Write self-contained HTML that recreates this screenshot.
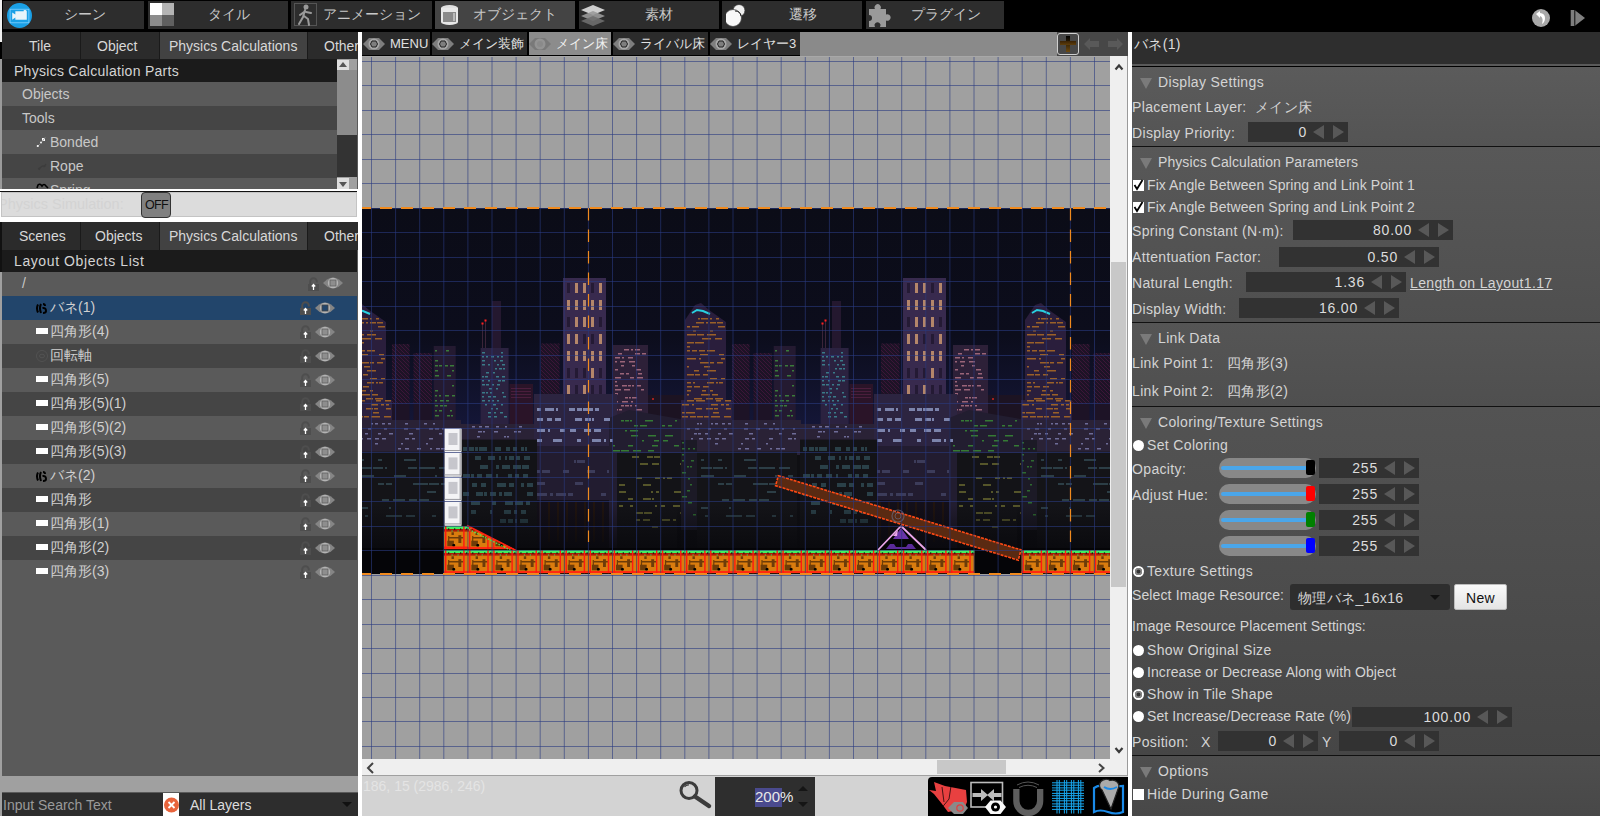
<!DOCTYPE html>
<html><head><meta charset="utf-8">
<style>
*{margin:0;padding:0;box-sizing:border-box}
html,body{width:1600px;height:816px;overflow:hidden;background:#000;font-family:"Liberation Sans",sans-serif;font-size:14px;color:#d4d4d4}
.a{position:absolute}
.t{position:absolute;white-space:nowrap;line-height:16px}
.t13{font-size:13px}
.btn{position:absolute;top:1px;height:28px;background:#2d2d2d}
.btn .l{position:absolute;top:5px;line-height:16px;font-size:14px;color:#c8c8c8;white-space:nowrap}
.tab{position:absolute;background:#2b2b2b;color:#d8d8d8}
.tab span{position:absolute;line-height:16px;white-space:nowrap}
.row{position:absolute;left:2px;width:335px;height:24px}
.lrow{position:absolute;left:2px;width:355px;height:24px}
.spin{position:absolute;height:20px;width:160px;background:#323232}
.spin .v{position:absolute;right:41px;top:2px;line-height:16px;color:#dcdcdc;letter-spacing:0.8px}
.spin .al{position:absolute;right:24px;top:3px;width:0;height:0;border-top:7px solid transparent;border-bottom:7px solid transparent;border-right:11px solid #585858}
.spin .ar{position:absolute;right:4px;top:3px;width:0;height:0;border-top:7px solid transparent;border-bottom:7px solid transparent;border-left:11px solid #585858}
.tri{position:absolute;width:0;height:0;border-left:6.5px solid transparent;border-right:6.5px solid transparent;border-top:11px solid #7a7a7a}
.rad{position:absolute;width:11px;height:11px;border-radius:50%;background:#fff}
.rad.on::after{content:"";position:absolute;left:2px;top:2px;width:7px;height:7px;border-radius:50%;background:#333;box-shadow:inset 0 0 0 1.5px #888}
.chk{position:absolute;width:11px;height:11px;background:#fff}
</style></head><body>

<!-- ============ TOP BAR ============ -->
<div class="a" style="left:0;top:0;width:1600px;height:32px;background:#000"></div>

<div class="btn" style="left:3px;width:141px">
  <svg class="a" style="left:3.5px;top:1.5px" width="25" height="25" viewBox="0 0 24 24"><circle cx="12" cy="12" r="12" fill="#1aa0e6"/><rect x="3" y="6" width="18" height="13" fill="none" stroke="#7fd0ff" stroke-width="0.8"/><path d="M5 9 L8 11 L8 8 L16 8 L16 7 A2 2 0 0 1 19 8 L19 16 L8 16 L8 14 L5 16 Z" fill="#e8f4fa"/></svg>
  <div class="l" style="left:60.5px">シーン</div>
</div>
<div class="btn" style="left:148px;width:140px">
  <svg class="a" style="left:2px;top:2px" width="24" height="23"><rect x="0" y="0" width="12" height="12" fill="#fff"/><rect x="12" y="0" width="12" height="12" fill="#b4b4b4"/><rect x="0" y="12" width="12" height="11" fill="#8c8c8c"/><rect x="12" y="12" width="12" height="11" fill="#606060"/></svg>
  <div class="l" style="left:59.5px">タイル</div>
</div>
<div class="btn" style="left:291px;width:141px">
  <svg class="a" style="left:3px;top:2px" width="23" height="23"><rect x="0.5" y="0.5" width="22" height="22" fill="none" stroke="#555"/><circle cx="12" cy="4" r="2.5" fill="#9a9a9a"/><path d="M11 7 L9 14 L5 21 M10 13 L14 16 L15 22 M10 9 L6 12 M12 9 L17 10" stroke="#9a9a9a" stroke-width="2" fill="none" stroke-linecap="round"/></svg>
  <div class="l" style="left:31.5px">アニメーション</div>
</div>
<div class="btn" style="left:435px;width:140px;background:#444">
  <svg class="a" style="left:5px;top:3px" width="19" height="22"><ellipse cx="9.5" cy="4" rx="8.5" ry="3" fill="#e0e0e0"/><path d="M1 4 L1 18 A8.5 3 0 0 0 18 18 L18 4" fill="#e8e8e8"/><rect x="3" y="8" width="13" height="10" fill="#8a8a8a"/><rect x="13" y="9" width="2" height="8" fill="#bbb"/></svg>
  <div class="l" style="left:37.5px">オブジェクト</div>
</div>
<div class="btn" style="left:579px;width:140px">
  <svg class="a" style="left:2px;top:4px" width="24" height="22"><path d="M0 5 L12 0 L24 5 L12 10 Z" fill="#cfcfcf"/><path d="M0 11 L12 6 L24 11 L12 16 Z" fill="#9a9a9a" opacity="0.9"/><path d="M0 16 L12 11 L24 16 L12 21 Z" fill="#6e6e6e" opacity="0.9"/></svg>
  <div class="l" style="left:66px">素材</div>
</div>
<div class="btn" style="left:722px;width:140px">
  <svg class="a" style="left:4px;top:3px" width="24" height="24"><circle cx="13" cy="6.5" r="6" fill="#f0f0f0" stroke="#333" stroke-width="0.8"/><circle cx="7" cy="14" r="8.5" fill="#f8f8f8" stroke="#444" stroke-width="0.8"/><path d="M9 7 A6 6 0 0 1 15 12" stroke="#222" fill="none"/></svg>
  <div class="l" style="left:66.5px">遷移</div>
</div>
<div class="btn" style="left:866px;width:138px">
  <svg class="a" style="left:2px;top:1.5px" width="26" height="26"><path d="M1 6 L7 6 A3.2 3.2 0 1 1 12.5 6 L18 6 L18 11.5 A3.3 3.3 0 1 1 18 17.5 L18 24 L12 24 A3 3 0 1 0 7 24 L1 24 L1 18 A2.8 2.8 0 1 0 1 12 Z" fill="#9a9a9a"/></svg>
  <div class="l" style="left:45px">プラグイン</div>
</div>

<svg class="a" style="left:1530px;top:7px" width="58" height="22">
  <circle cx="11" cy="11" r="9" fill="#a8a8a8"/>
  <path d="M6 7 L10 4 L10 6 Q15 6.5 15 11 Q15 15 12 17 Q13 14 12.5 12 Q12 9.5 10 9 L10 11 Z" fill="#fff"/>
  <rect x="40.7" y="3" width="3.6" height="16" fill="#7e7e7e"/><rect x="44.3" y="3" width="1" height="16" fill="#333"/>
  <path d="M45.3 3.5 L55 11 L45.3 18.5 Z" fill="#808080"/>
</svg>

<!-- ============ LEFT PANEL ============ -->
<div class="a" style="left:0;top:32px;width:358px;height:784px;background:#5a5a5a"></div>
<div class="a" style="left:0;top:32px;width:1.5px;height:10px;background:#f0f0f0"></div><div class="a" style="left:0;top:0;width:1.5px;height:32px;background:#f0f0f0;z-index:2"></div>
<div class="a" style="left:0;top:42px;width:2px;height:17px;background:#000"></div>
<div class="a" style="left:0;top:59px;width:2px;height:130px;background:#9a9a9a"></div>
<div class="a" style="left:0;top:222px;width:2px;height:50px;background:#111"></div>
<div class="a" style="left:0;top:272px;width:2px;height:544px;background:#a0a0a0"></div>

<!-- tabs 1 -->
<div class="a" style="left:2px;top:32px;width:356px;height:27px;background:#1a1a1a"></div>
<div class="tab" style="left:2px;top:32px;width:78px;height:27px"><span style="left:27px;top:6px">Tile</span></div>
<div class="tab" style="left:81px;top:32px;width:78px;height:27px"><span style="left:16px;top:6px">Object</span></div>
<div class="tab" style="left:160px;top:32px;width:147px;height:27px;background:#424242"><span style="left:9px;top:6px">Physics Calculations</span></div>
<div class="tab" style="left:308px;top:32px;width:50px;height:27px;overflow:hidden"><span style="left:16px;top:6px">Other</span></div>

<div class="a" style="left:2px;top:59px;width:335px;height:23px;background:#1b1b1b"></div>
<div class="t" style="left:14px;top:63px;letter-spacing:0.28px">Physics Calculation Parts</div>
<div class="row" style="top:82px;background:#5a5a5a"></div><div class="t" style="left:22px;top:86px;color:#c8c8c8">Objects</div>
<div class="row" style="top:106px;background:#454545"></div><div class="t" style="left:22px;top:110px;color:#c8c8c8">Tools</div>
<div class="row" style="top:130px;background:#5a5a5a"></div><div class="t" style="left:50px;top:134px;color:#c8c8c8">Bonded</div>
<div class="row" style="top:154px;background:#454545"></div><div class="t" style="left:50px;top:158px;color:#c8c8c8">Rope</div>
<div class="row" style="top:178px;height:11px;background:#5a5a5a;overflow:hidden"><div class="t" style="left:48px;top:4px;color:#c8c8c8">Spring</div></div>
<svg class="a" style="left:36px;top:136px" width="14" height="56"><rect x="6" y="2" width="3" height="3" fill="#fff"/><path d="M9.5 1 L5 7" stroke="#888" stroke-width="0.8"/><circle cx="5" cy="6.5" r="0.9" fill="#fff"/><path d="M4 8 L2 10" stroke="#999" stroke-width="0.8"/><circle cx="1.8" cy="10" r="1.1" fill="#fff"/><path d="M3 34 Q5 29 9 30 Q7 32 10 28 M2 33 L5 31" stroke="#3c3c3c" stroke-width="1.2" fill="none"/><path d="M1 52 L2 49 Q4 47 6 50 Q8 47 10 50 L12 52" stroke="#000" stroke-width="1.6" fill="none"/></svg>
<!-- scrollbar -->
<div class="a" style="left:337px;top:59px;width:20px;height:130px;background:#a0a0a0"></div>
<div class="a" style="left:337px;top:70px;width:20px;height:65px;background:#8c8c8c"></div>
<div class="a" style="left:337px;top:135px;width:20px;height:42px;background:#333"></div>
<div class="a" style="left:337px;top:60px;width:12px;height:10px;background:#dedede"></div>
<div class="a" style="left:339px;top:62px;width:0;height:0;border-left:4px solid transparent;border-right:4px solid transparent;border-bottom:5px solid #555"></div>
<div class="a" style="left:337px;top:178px;width:12px;height:11px;background:#dedede"></div>
<div class="a" style="left:339px;top:182px;width:0;height:0;border-left:4px solid transparent;border-right:4px solid transparent;border-top:5px solid #555"></div>

<!-- off bar -->
<div class="a" style="left:0;top:189px;width:358px;height:33px;background:#fff"></div>
<div class="a" style="left:0;top:191px;width:357px;height:1px;background:#111"></div>
<div class="a" style="left:1px;top:192px;width:356px;height:25px;background:#dcdcdc;border:1px solid #c4c4c4"></div>
<div class="a" style="left:2px;top:193px;width:130px;height:23px;overflow:hidden"><div class="t" style="left:-4px;top:3px;color:#d3d3d3;font-size:14.5px">Physics Simulation:</div></div>
<div class="a" style="left:141px;top:191.5px;width:29.5px;height:26px;background:#808080;border:1.2px solid #333;border-radius:4px"></div>
<div class="t" style="left:145px;top:196.5px;font-size:12.5px;letter-spacing:-0.7px;color:#111">OFF</div>

<!-- tabs 2 -->
<div class="a" style="left:2px;top:222px;width:356px;height:28px;background:#1a1a1a"></div>
<div class="tab" style="left:2px;top:222px;width:78px;height:28px"><span style="left:17px;top:6px">Scenes</span></div>
<div class="tab" style="left:81px;top:222px;width:78px;height:28px"><span style="left:14px;top:6px">Objects</span></div>
<div class="tab" style="left:160px;top:222px;width:147px;height:28px;background:#424242"><span style="left:9px;top:6px">Physics Calculations</span></div>
<div class="tab" style="left:308px;top:222px;width:50px;height:28px;overflow:hidden"><span style="left:16px;top:6px">Other</span></div>

<div class="a" style="left:2px;top:250px;width:355px;height:22px;background:#1b1b1b"></div>
<div class="t" style="left:14px;top:253px;letter-spacing:0.6px">Layout Objects List</div>
<!--list-->
<div class="lrow" style="top:272px;background:#5a5a5a"></div>
<div class="t" style="left:22px;top:275px;color:#c8c8c8">/</div>
<svg class="a" style="left:308px;top:277px" width="11" height="14"><path d="M2.2 8 L2.2 4.5 A3.3 3.3 0 0 1 8.8 4.5 L8.8 5.5" stroke="#4e4e4e" stroke-width="2" fill="none"/><rect x="0" y="7" width="11" height="7" fill="#4e4e4e"/><path d="M5.5 13 L5.5 8 M3.8 9.5 L5.5 7.5 L7.2 9.5" stroke="#fff" stroke-width="1.3" fill="none"/></svg>
<svg class="a" style="left:323px;top:277px" width="20" height="12"><path d="M0 6 L4 2.5 Q10 -1.5 16 2.5 L20 6 L16 9.5 Q10 13.5 4 9.5 Z" fill="#858585"/><circle cx="10" cy="6" r="5.2" fill="#b4b4b4"/><rect x="7" y="3" width="6" height="6" fill="#8e8e8e" stroke="#606060" stroke-width="0.8"/></svg>
<div class="lrow" style="top:296px;background:#22456b"></div>
<svg class="a" style="left:36px;top:303px" width="12" height="11"><path d="M2 1.5 Q0 5 2 9.5 M5 1 Q3 5 5 10 M7 1 Q9 1 9 3 M6.5 5 Q10 4.5 10 8 Q10 10 7 10" stroke="#000" stroke-width="2" fill="none"/></svg>
<div class="t" style="left:50px;top:299px;color:#d0d0d0">バネ(1)</div>
<svg class="a" style="left:300px;top:301px" width="11" height="14"><path d="M2.2 8 L2.2 4.5 A3.3 3.3 0 0 1 8.8 4.5 L8.8 5.5" stroke="#4e4e4e" stroke-width="2" fill="none"/><rect x="0" y="7" width="11" height="7" fill="#4e4e4e"/><path d="M5.5 13 L5.5 8 M3.8 9.5 L5.5 7.5 L7.2 9.5" stroke="#fff" stroke-width="1.3" fill="none"/></svg>
<svg class="a" style="left:315px;top:302px" width="20" height="12"><path d="M0 6 L4 2.5 Q10 -1.5 16 2.5 L20 6 L16 9.5 Q10 13.5 4 9.5 Z" fill="#858585"/><circle cx="10" cy="6" r="5.2" fill="#b4b4b4"/><rect x="7" y="3" width="6" height="6" fill="#22456b" stroke="#444" stroke-width="0.8"/></svg>
<div class="lrow" style="top:320px;background:#5a5a5a"></div>
<div class="a" style="left:36px;top:328px;width:12px;height:6px;background:#fff"></div>
<div class="t" style="left:50px;top:323px;color:#d0d0d0">四角形(4)</div>
<svg class="a" style="left:300px;top:325px" width="11" height="14"><path d="M2.2 8 L2.2 4.5 A3.3 3.3 0 0 1 8.8 4.5 L8.8 5.5" stroke="#4e4e4e" stroke-width="2" fill="none"/><rect x="0" y="7" width="11" height="7" fill="#4e4e4e"/><path d="M5.5 13 L5.5 8 M3.8 9.5 L5.5 7.5 L7.2 9.5" stroke="#fff" stroke-width="1.3" fill="none"/></svg>
<svg class="a" style="left:315px;top:326px" width="20" height="12"><path d="M0 6 L4 2.5 Q10 -1.5 16 2.5 L20 6 L16 9.5 Q10 13.5 4 9.5 Z" fill="#858585"/><circle cx="10" cy="6" r="5.2" fill="#b4b4b4"/><rect x="7" y="3" width="6" height="6" fill="#8e8e8e" stroke="#606060" stroke-width="0.8"/></svg>
<div class="lrow" style="top:344px;background:#454545"></div>
<svg class="a" style="left:36px;top:350px" width="12" height="12"><circle cx="6" cy="6" r="5.5" fill="none" stroke="#555" stroke-width="0.8"/><ellipse cx="6" cy="6" rx="2.5" ry="1.8" fill="none" stroke="#555" stroke-width="0.8"/></svg>
<div class="t" style="left:50px;top:347px;color:#d0d0d0">回転軸</div>
<svg class="a" style="left:300px;top:349px" width="11" height="14"><path d="M2.2 8 L2.2 4.5 A3.3 3.3 0 0 1 8.8 4.5 L8.8 5.5" stroke="#4e4e4e" stroke-width="2" fill="none"/><rect x="0" y="7" width="11" height="7" fill="#4e4e4e"/><path d="M5.5 13 L5.5 8 M3.8 9.5 L5.5 7.5 L7.2 9.5" stroke="#fff" stroke-width="1.3" fill="none"/></svg>
<svg class="a" style="left:315px;top:350px" width="20" height="12"><path d="M0 6 L4 2.5 Q10 -1.5 16 2.5 L20 6 L16 9.5 Q10 13.5 4 9.5 Z" fill="#858585"/><circle cx="10" cy="6" r="5.2" fill="#b4b4b4"/><rect x="7" y="3" width="6" height="6" fill="#8e8e8e" stroke="#606060" stroke-width="0.8"/></svg>
<div class="lrow" style="top:368px;background:#5a5a5a"></div>
<div class="a" style="left:36px;top:376px;width:12px;height:6px;background:#fff"></div>
<div class="t" style="left:50px;top:371px;color:#d0d0d0">四角形(5)</div>
<svg class="a" style="left:300px;top:373px" width="11" height="14"><path d="M2.2 8 L2.2 4.5 A3.3 3.3 0 0 1 8.8 4.5 L8.8 5.5" stroke="#4e4e4e" stroke-width="2" fill="none"/><rect x="0" y="7" width="11" height="7" fill="#4e4e4e"/><path d="M5.5 13 L5.5 8 M3.8 9.5 L5.5 7.5 L7.2 9.5" stroke="#fff" stroke-width="1.3" fill="none"/></svg>
<svg class="a" style="left:315px;top:374px" width="20" height="12"><path d="M0 6 L4 2.5 Q10 -1.5 16 2.5 L20 6 L16 9.5 Q10 13.5 4 9.5 Z" fill="#858585"/><circle cx="10" cy="6" r="5.2" fill="#b4b4b4"/><rect x="7" y="3" width="6" height="6" fill="#8e8e8e" stroke="#606060" stroke-width="0.8"/></svg>
<div class="lrow" style="top:392px;background:#454545"></div>
<div class="a" style="left:36px;top:400px;width:12px;height:6px;background:#fff"></div>
<div class="t" style="left:50px;top:395px;color:#d0d0d0">四角形(5)(1)</div>
<svg class="a" style="left:300px;top:397px" width="11" height="14"><path d="M2.2 8 L2.2 4.5 A3.3 3.3 0 0 1 8.8 4.5 L8.8 5.5" stroke="#4e4e4e" stroke-width="2" fill="none"/><rect x="0" y="7" width="11" height="7" fill="#4e4e4e"/><path d="M5.5 13 L5.5 8 M3.8 9.5 L5.5 7.5 L7.2 9.5" stroke="#fff" stroke-width="1.3" fill="none"/></svg>
<svg class="a" style="left:315px;top:398px" width="20" height="12"><path d="M0 6 L4 2.5 Q10 -1.5 16 2.5 L20 6 L16 9.5 Q10 13.5 4 9.5 Z" fill="#858585"/><circle cx="10" cy="6" r="5.2" fill="#b4b4b4"/><rect x="7" y="3" width="6" height="6" fill="#8e8e8e" stroke="#606060" stroke-width="0.8"/></svg>
<div class="lrow" style="top:416px;background:#5a5a5a"></div>
<div class="a" style="left:36px;top:424px;width:12px;height:6px;background:#fff"></div>
<div class="t" style="left:50px;top:419px;color:#d0d0d0">四角形(5)(2)</div>
<svg class="a" style="left:300px;top:421px" width="11" height="14"><path d="M2.2 8 L2.2 4.5 A3.3 3.3 0 0 1 8.8 4.5 L8.8 5.5" stroke="#4e4e4e" stroke-width="2" fill="none"/><rect x="0" y="7" width="11" height="7" fill="#4e4e4e"/><path d="M5.5 13 L5.5 8 M3.8 9.5 L5.5 7.5 L7.2 9.5" stroke="#fff" stroke-width="1.3" fill="none"/></svg>
<svg class="a" style="left:315px;top:422px" width="20" height="12"><path d="M0 6 L4 2.5 Q10 -1.5 16 2.5 L20 6 L16 9.5 Q10 13.5 4 9.5 Z" fill="#858585"/><circle cx="10" cy="6" r="5.2" fill="#b4b4b4"/><rect x="7" y="3" width="6" height="6" fill="#8e8e8e" stroke="#606060" stroke-width="0.8"/></svg>
<div class="lrow" style="top:440px;background:#454545"></div>
<div class="a" style="left:36px;top:448px;width:12px;height:6px;background:#fff"></div>
<div class="t" style="left:50px;top:443px;color:#d0d0d0">四角形(5)(3)</div>
<svg class="a" style="left:300px;top:445px" width="11" height="14"><path d="M2.2 8 L2.2 4.5 A3.3 3.3 0 0 1 8.8 4.5 L8.8 5.5" stroke="#4e4e4e" stroke-width="2" fill="none"/><rect x="0" y="7" width="11" height="7" fill="#4e4e4e"/><path d="M5.5 13 L5.5 8 M3.8 9.5 L5.5 7.5 L7.2 9.5" stroke="#fff" stroke-width="1.3" fill="none"/></svg>
<svg class="a" style="left:315px;top:446px" width="20" height="12"><path d="M0 6 L4 2.5 Q10 -1.5 16 2.5 L20 6 L16 9.5 Q10 13.5 4 9.5 Z" fill="#858585"/><circle cx="10" cy="6" r="5.2" fill="#b4b4b4"/><rect x="7" y="3" width="6" height="6" fill="#8e8e8e" stroke="#606060" stroke-width="0.8"/></svg>
<div class="lrow" style="top:464px;background:#5a5a5a"></div>
<svg class="a" style="left:36px;top:471px" width="12" height="11"><path d="M2 1.5 Q0 5 2 9.5 M5 1 Q3 5 5 10 M7 1 Q9 1 9 3 M6.5 5 Q10 4.5 10 8 Q10 10 7 10" stroke="#000" stroke-width="2" fill="none"/></svg>
<div class="t" style="left:50px;top:467px;color:#d0d0d0">バネ(2)</div>
<svg class="a" style="left:300px;top:469px" width="11" height="14"><path d="M2.2 8 L2.2 4.5 A3.3 3.3 0 0 1 8.8 4.5 L8.8 5.5" stroke="#4e4e4e" stroke-width="2" fill="none"/><rect x="0" y="7" width="11" height="7" fill="#4e4e4e"/><path d="M5.5 13 L5.5 8 M3.8 9.5 L5.5 7.5 L7.2 9.5" stroke="#fff" stroke-width="1.3" fill="none"/></svg>
<svg class="a" style="left:315px;top:470px" width="20" height="12"><path d="M0 6 L4 2.5 Q10 -1.5 16 2.5 L20 6 L16 9.5 Q10 13.5 4 9.5 Z" fill="#858585"/><circle cx="10" cy="6" r="5.2" fill="#b4b4b4"/><rect x="7" y="3" width="6" height="6" fill="#8e8e8e" stroke="#606060" stroke-width="0.8"/></svg>
<div class="lrow" style="top:488px;background:#454545"></div>
<div class="a" style="left:36px;top:496px;width:12px;height:6px;background:#fff"></div>
<div class="t" style="left:50px;top:491px;color:#d0d0d0">四角形</div>
<svg class="a" style="left:300px;top:493px" width="11" height="14"><path d="M2.2 8 L2.2 4.5 A3.3 3.3 0 0 1 8.8 4.5 L8.8 5.5" stroke="#4e4e4e" stroke-width="2" fill="none"/><rect x="0" y="7" width="11" height="7" fill="#4e4e4e"/><path d="M5.5 13 L5.5 8 M3.8 9.5 L5.5 7.5 L7.2 9.5" stroke="#fff" stroke-width="1.3" fill="none"/></svg>
<svg class="a" style="left:315px;top:494px" width="20" height="12"><path d="M0 6 L4 2.5 Q10 -1.5 16 2.5 L20 6 L16 9.5 Q10 13.5 4 9.5 Z" fill="#858585"/><circle cx="10" cy="6" r="5.2" fill="#b4b4b4"/><rect x="7" y="3" width="6" height="6" fill="#8e8e8e" stroke="#606060" stroke-width="0.8"/></svg>
<div class="lrow" style="top:512px;background:#5a5a5a"></div>
<div class="a" style="left:36px;top:520px;width:12px;height:6px;background:#fff"></div>
<div class="t" style="left:50px;top:515px;color:#d0d0d0">四角形(1)</div>
<svg class="a" style="left:300px;top:517px" width="11" height="14"><path d="M2.2 8 L2.2 4.5 A3.3 3.3 0 0 1 8.8 4.5 L8.8 5.5" stroke="#4e4e4e" stroke-width="2" fill="none"/><rect x="0" y="7" width="11" height="7" fill="#4e4e4e"/><path d="M5.5 13 L5.5 8 M3.8 9.5 L5.5 7.5 L7.2 9.5" stroke="#fff" stroke-width="1.3" fill="none"/></svg>
<svg class="a" style="left:315px;top:518px" width="20" height="12"><path d="M0 6 L4 2.5 Q10 -1.5 16 2.5 L20 6 L16 9.5 Q10 13.5 4 9.5 Z" fill="#858585"/><circle cx="10" cy="6" r="5.2" fill="#b4b4b4"/><rect x="7" y="3" width="6" height="6" fill="#8e8e8e" stroke="#606060" stroke-width="0.8"/></svg>
<div class="lrow" style="top:536px;background:#454545"></div>
<div class="a" style="left:36px;top:544px;width:12px;height:6px;background:#fff"></div>
<div class="t" style="left:50px;top:539px;color:#d0d0d0">四角形(2)</div>
<svg class="a" style="left:300px;top:541px" width="11" height="14"><path d="M2.2 8 L2.2 4.5 A3.3 3.3 0 0 1 8.8 4.5 L8.8 5.5" stroke="#4e4e4e" stroke-width="2" fill="none"/><rect x="0" y="7" width="11" height="7" fill="#4e4e4e"/><path d="M5.5 13 L5.5 8 M3.8 9.5 L5.5 7.5 L7.2 9.5" stroke="#fff" stroke-width="1.3" fill="none"/></svg>
<svg class="a" style="left:315px;top:542px" width="20" height="12"><path d="M0 6 L4 2.5 Q10 -1.5 16 2.5 L20 6 L16 9.5 Q10 13.5 4 9.5 Z" fill="#858585"/><circle cx="10" cy="6" r="5.2" fill="#b4b4b4"/><rect x="7" y="3" width="6" height="6" fill="#8e8e8e" stroke="#606060" stroke-width="0.8"/></svg>
<div class="lrow" style="top:560px;background:#5a5a5a"></div>
<div class="a" style="left:36px;top:568px;width:12px;height:6px;background:#fff"></div>
<div class="t" style="left:50px;top:563px;color:#d0d0d0">四角形(3)</div>
<svg class="a" style="left:300px;top:565px" width="11" height="14"><path d="M2.2 8 L2.2 4.5 A3.3 3.3 0 0 1 8.8 4.5 L8.8 5.5" stroke="#4e4e4e" stroke-width="2" fill="none"/><rect x="0" y="7" width="11" height="7" fill="#4e4e4e"/><path d="M5.5 13 L5.5 8 M3.8 9.5 L5.5 7.5 L7.2 9.5" stroke="#fff" stroke-width="1.3" fill="none"/></svg>
<svg class="a" style="left:315px;top:566px" width="20" height="12"><path d="M0 6 L4 2.5 Q10 -1.5 16 2.5 L20 6 L16 9.5 Q10 13.5 4 9.5 Z" fill="#858585"/><circle cx="10" cy="6" r="5.2" fill="#b4b4b4"/><rect x="7" y="3" width="6" height="6" fill="#8e8e8e" stroke="#606060" stroke-width="0.8"/></svg>
<!--/list-->

<div class="a" style="left:2px;top:776px;width:356px;height:16px;background:#a0a0a0"></div>
<div class="a" style="left:2px;top:793px;width:356px;height:23px;background:#2d2d2d"></div>
<div class="t" style="left:3px;top:797px;color:#9a9a9a">Input Search Text</div>
<div class="a" style="left:163px;top:793px;width:16px;height:23px;background:#fff"></div>
<svg class="a" style="left:163px;top:797px" width="16" height="16"><circle cx="8.5" cy="8" r="7.5" fill="#e8643c"/><path d="M5.5 5 L11.5 11 M11.5 5 L5.5 11" stroke="#fff" stroke-width="1.8"/></svg>
<div class="t" style="left:190px;top:797px;color:#dcdcdc">All Layers</div>
<div class="a" style="left:342px;top:802px;width:0;height:0;border-left:5px solid transparent;border-right:5px solid transparent;border-top:5px solid #111"></div>

<!--canvas-->
<svg class="a" style="left:362px;top:56px" width="748" height="703" viewBox="362 56 748 703">
<defs>
<pattern id="diag" width="4" height="4" patternUnits="userSpaceOnUse"><path d="M0 0 L4 4" stroke="#40163a" stroke-width="0.9"/></pattern>
<linearGradient id="sky" x1="0" y1="0" x2="0" y2="1"><stop offset="0" stop-color="#0b0c17"/><stop offset="0.35" stop-color="#0c0d1c"/><stop offset="0.62" stop-color="#15173a"/><stop offset="0.8" stop-color="#111226"/><stop offset="1" stop-color="#060608"/></linearGradient>
<linearGradient id="lowfade" x1="0" y1="0" x2="0" y2="1"><stop offset="0" stop-color="#08080c" stop-opacity="0"/><stop offset="1" stop-color="#08080c" stop-opacity="0.9"/></linearGradient>
<clipPath id="scene"><rect x="362" y="208" width="748" height="366"/></clipPath>
<g id="ct"><path d="M-2 320 L8 305 L14 303 L22 310 L39 322 L39 450 L-2 450 Z" fill="#2a1e3c"/>
<path d="M5 313 L10 310 L16 311 L23 314" stroke="#29d0e0" stroke-width="2" fill="none"/>
<rect x="11.0" y="318.0" width="2.0" height="1.5" fill="#9a6028"/>
<rect x="14.0" y="318.0" width="7.0" height="1.5" fill="#9a6028"/>
<rect x="23.0" y="318.0" width="2.0" height="1.5" fill="#9a6028"/>
<rect x="29.0" y="318.0" width="3.0" height="1.5" fill="#9a6028"/>
<rect x="9.0" y="322.0" width="8.0" height="1.5" fill="#9a6028"/>
<rect x="19.0" y="322.0" width="2.0" height="1.5" fill="#9a6028"/>
<rect x="23.0" y="322.0" width="6.0" height="1.5" fill="#9a6028"/>
<rect x="30.0" y="322.0" width="6.0" height="1.5" fill="#9a6028"/>
<rect x="0.0" y="326.0" width="3.0" height="1.5" fill="#9a6028"/>
<rect x="5.0" y="326.0" width="7.0" height="1.5" fill="#9a6028"/>
<rect x="31.0" y="326.0" width="7.0" height="1.5" fill="#9a6028"/>
<rect x="6.0" y="330.0" width="3.0" height="1.5" fill="#9a6028"/>
<rect x="23.0" y="330.0" width="3.0" height="1.5" fill="#9a6028"/>
<rect x="0.0" y="334.0" width="9.0" height="1.5" fill="#9a6028"/>
<rect x="10.0" y="334.0" width="7.0" height="1.5" fill="#9a6028"/>
<rect x="20.0" y="334.0" width="9.0" height="1.5" fill="#9a6028"/>
<rect x="15.0" y="338.0" width="9.0" height="1.5" fill="#9a6028"/>
<rect x="28.0" y="338.0" width="7.0" height="1.5" fill="#9a6028"/>
<rect x="0.0" y="342.0" width="7.0" height="1.5" fill="#9a6028"/>
<rect x="8.0" y="342.0" width="9.0" height="1.5" fill="#9a6028"/>
<rect x="0.0" y="346.0" width="3.0" height="1.5" fill="#9a6028"/>
<rect x="0.0" y="350.0" width="3.0" height="1.5" fill="#9a6028"/>
<rect x="5.0" y="350.0" width="5.0" height="1.5" fill="#9a6028"/>
<rect x="12.0" y="350.0" width="6.0" height="1.5" fill="#9a6028"/>
<rect x="20.0" y="350.0" width="8.0" height="1.5" fill="#9a6028"/>
<rect x="13.0" y="354.0" width="8.0" height="1.5" fill="#9a6028"/>
<rect x="32.0" y="354.0" width="5.0" height="1.5" fill="#9a6028"/>
<rect x="0.0" y="358.0" width="9.0" height="1.5" fill="#9a6028"/>
<rect x="12.0" y="358.0" width="2.0" height="1.5" fill="#9a6028"/>
<rect x="34.0" y="358.0" width="4.0" height="1.5" fill="#9a6028"/>
<rect x="13.0" y="362.0" width="9.0" height="1.5" fill="#9a6028"/>
<rect x="23.0" y="362.0" width="4.0" height="1.5" fill="#9a6028"/>
<rect x="30.0" y="362.0" width="6.0" height="1.5" fill="#9a6028"/>
<rect x="0.0" y="366.0" width="2.0" height="1.5" fill="#9a6028"/>
<rect x="17.0" y="366.0" width="6.0" height="1.5" fill="#9a6028"/>
<rect x="7.0" y="370.0" width="5.0" height="1.5" fill="#9a6028"/>
<rect x="20.0" y="370.0" width="9.0" height="1.5" fill="#9a6028"/>
<rect x="0.0" y="374.0" width="7.0" height="1.5" fill="#9a6028"/>
<rect x="8.0" y="374.0" width="5.0" height="1.5" fill="#9a6028"/>
<rect x="16.0" y="374.0" width="5.0" height="1.5" fill="#9a6028"/>
<rect x="23.0" y="378.0" width="7.0" height="1.5" fill="#9a6028"/>
<rect x="34.0" y="378.0" width="4.0" height="1.5" fill="#9a6028"/>
<rect x="0.0" y="382.0" width="4.0" height="1.5" fill="#9a6028"/>
<rect x="6.0" y="382.0" width="2.0" height="1.5" fill="#9a6028"/>
<rect x="20.0" y="382.0" width="7.0" height="1.5" fill="#9a6028"/>
<rect x="29.0" y="382.0" width="2.0" height="1.5" fill="#9a6028"/>
<rect x="32.0" y="382.0" width="4.0" height="1.5" fill="#9a6028"/>
<rect x="0.0" y="386.0" width="5.0" height="1.5" fill="#9a6028"/>
<rect x="7.0" y="386.0" width="6.0" height="1.5" fill="#9a6028"/>
<rect x="16.0" y="386.0" width="6.0" height="1.5" fill="#9a6028"/>
<rect x="0.0" y="390.0" width="4.0" height="1.5" fill="#9a6028"/>
<rect x="15.0" y="390.0" width="4.0" height="1.5" fill="#9a6028"/>
<rect x="23.0" y="390.0" width="3.0" height="1.5" fill="#9a6028"/>
<rect x="0.0" y="394.0" width="2.0" height="1.5" fill="#9a6028"/>
<rect x="14.0" y="394.0" width="9.0" height="1.5" fill="#9a6028"/>
<rect x="25.0" y="394.0" width="6.0" height="1.5" fill="#9a6028"/>
<rect x="7.0" y="398.0" width="8.0" height="1.5" fill="#9a6028"/>
<rect x="19.0" y="398.0" width="7.0" height="1.5" fill="#9a6028"/>
<rect x="28.0" y="398.0" width="8.0" height="1.5" fill="#9a6028"/>
<rect x="-6.0" y="400.0" width="51.0" height="50.0" fill="#2c2040"/>
<rect x="0.0" y="400.0" width="7.0" height="1.5" fill="#9a6028"/>
<rect x="9.0" y="400.0" width="9.0" height="1.5" fill="#9a6028"/>
<rect x="29.0" y="400.0" width="5.0" height="1.5" fill="#9a6028"/>
<rect x="38.0" y="400.0" width="6.0" height="1.5" fill="#9a6028"/>
<rect x="-5.0" y="404.0" width="7.0" height="1.5" fill="#9a6028"/>
<rect x="5.0" y="404.0" width="2.0" height="1.5" fill="#9a6028"/>
<rect x="24.0" y="404.0" width="7.0" height="1.5" fill="#9a6028"/>
<rect x="34.0" y="404.0" width="3.0" height="1.5" fill="#9a6028"/>
<rect x="39.0" y="404.0" width="3.0" height="1.5" fill="#9a6028"/>
<rect x="9.0" y="408.0" width="6.0" height="1.5" fill="#9a6028"/>
<rect x="19.0" y="408.0" width="7.0" height="1.5" fill="#9a6028"/>
<rect x="27.0" y="408.0" width="4.0" height="1.5" fill="#9a6028"/>
<rect x="39.0" y="408.0" width="5.0" height="1.5" fill="#9a6028"/>
<rect x="-5.0" y="412.0" width="3.0" height="1.5" fill="#9a6028"/>
<rect x="-1.0" y="412.0" width="9.0" height="1.5" fill="#9a6028"/>
<rect x="26.0" y="412.0" width="6.0" height="1.5" fill="#9a6028"/>
<rect x="-5.0" y="416.0" width="6.0" height="1.5" fill="#9a6028"/>
<rect x="3.0" y="416.0" width="6.0" height="1.5" fill="#9a6028"/>
<rect x="10.0" y="416.0" width="6.0" height="1.5" fill="#9a6028"/>
<rect x="17.0" y="416.0" width="5.0" height="1.5" fill="#9a6028"/>
<rect x="24.0" y="416.0" width="9.0" height="1.5" fill="#9a6028"/>
<rect x="37.0" y="416.0" width="7.0" height="1.5" fill="#9a6028"/>
<rect x="3.0" y="420.0" width="7.0" height="1.5" fill="#9a6028"/>
<rect x="21.0" y="420.0" width="4.0" height="1.5" fill="#9a6028"/>
<rect x="28.0" y="420.0" width="8.0" height="1.5" fill="#9a6028"/>
<rect x="1.0" y="424.0" width="9.0" height="1.5" fill="#9a6028"/>
<rect x="13.0" y="424.0" width="9.0" height="1.5" fill="#9a6028"/>
<rect x="35.0" y="424.0" width="5.0" height="1.5" fill="#9a6028"/>
<rect x="-5.0" y="428.0" width="5.0" height="1.5" fill="#9a6028"/>
<rect x="1.0" y="428.0" width="7.0" height="1.5" fill="#9a6028"/>
<rect x="12.0" y="428.0" width="6.0" height="1.5" fill="#9a6028"/>
<rect x="20.0" y="428.0" width="5.0" height="1.5" fill="#9a6028"/>
<rect x="26.0" y="428.0" width="3.0" height="1.5" fill="#9a6028"/>
<rect x="30.0" y="428.0" width="4.0" height="1.5" fill="#9a6028"/>
<rect x="35.0" y="428.0" width="8.0" height="1.5" fill="#9a6028"/>
<rect x="-5.0" y="432.0" width="5.0" height="1.5" fill="#9a6028"/>
<rect x="14.0" y="432.0" width="4.0" height="1.5" fill="#9a6028"/>
<rect x="31.0" y="432.0" width="5.0" height="1.5" fill="#9a6028"/>
<rect x="8.0" y="436.0" width="9.0" height="1.5" fill="#9a6028"/>
<rect x="-5.0" y="444.0" width="4.0" height="1.5" fill="#9a6028"/>
<rect x="0.0" y="444.0" width="9.0" height="1.5" fill="#9a6028"/>
<rect x="18.0" y="444.0" width="6.0" height="1.5" fill="#9a6028"/>
<rect x="45.0" y="344.0" width="17.5" height="100.0" fill="#1d1326"/>
<rect x="66.5" y="353.0" width="18.5" height="90.0" fill="#1d1326"/>
<rect x="45" y="344" width="17.5" height="60" fill="url(#diag)"/>
<rect x="66.5" y="353" width="18.5" height="50" fill="url(#diag)"/>
<rect x="86.7" y="346.0" width="22.0" height="100.0" fill="#241a31"/>
<rect x="88.0" y="350.0" width="2.0" height="1.5" fill="#3a7a3a"/>
<rect x="99.0" y="350.0" width="3.0" height="1.5" fill="#3a7a3a"/>
<rect x="88.0" y="360.0" width="3.0" height="1.5" fill="#3a7a3a"/>
<rect x="88.0" y="365.0" width="3.0" height="1.5" fill="#3a7a3a"/>
<rect x="92.0" y="365.0" width="3.0" height="1.5" fill="#3a7a3a"/>
<rect x="98.0" y="365.0" width="3.0" height="1.5" fill="#3a7a3a"/>
<rect x="103.0" y="365.0" width="4.0" height="1.5" fill="#3a7a3a"/>
<rect x="88.0" y="370.0" width="3.0" height="1.5" fill="#3a7a3a"/>
<rect x="105.0" y="370.0" width="2.0" height="1.5" fill="#3a7a3a"/>
<rect x="88.0" y="375.0" width="4.0" height="1.5" fill="#3a7a3a"/>
<rect x="100.0" y="375.0" width="4.0" height="1.5" fill="#3a7a3a"/>
<rect x="105.0" y="385.0" width="2.0" height="1.5" fill="#3a7a3a"/>
<rect x="88.0" y="390.0" width="3.0" height="1.5" fill="#3a7a3a"/>
<rect x="88.0" y="395.0" width="2.0" height="1.5" fill="#3a7a3a"/>
<rect x="92.0" y="395.0" width="2.0" height="1.5" fill="#3a7a3a"/>
<rect x="98.0" y="395.0" width="4.0" height="1.5" fill="#3a7a3a"/>
<rect x="105.0" y="395.0" width="3.0" height="1.5" fill="#3a7a3a"/>
<rect x="88.0" y="400.0" width="2.0" height="1.5" fill="#3a7a3a"/>
<rect x="93.0" y="400.0" width="4.0" height="1.5" fill="#3a7a3a"/>
<rect x="99.0" y="400.0" width="3.0" height="1.5" fill="#3a7a3a"/>
<rect x="88.0" y="405.0" width="3.0" height="1.5" fill="#3a7a3a"/>
<rect x="93.0" y="405.0" width="3.0" height="1.5" fill="#3a7a3a"/>
<rect x="97.0" y="405.0" width="3.0" height="1.5" fill="#3a7a3a"/>
<rect x="88.0" y="410.0" width="2.0" height="1.5" fill="#3a7a3a"/>
<rect x="92.0" y="410.0" width="3.0" height="1.5" fill="#3a7a3a"/>
<rect x="103.0" y="410.0" width="2.0" height="1.5" fill="#3a7a3a"/>
<rect x="88.0" y="415.0" width="4.0" height="1.5" fill="#3a7a3a"/>
<rect x="100.0" y="415.0" width="3.0" height="1.5" fill="#3a7a3a"/>
<rect x="104.0" y="415.0" width="2.0" height="1.5" fill="#3a7a3a"/>
<rect x="135.0" y="323.0" width="1.0" height="30.0" fill="#3a2438"/>
<rect x="138.0" y="320.0" width="1.0" height="33.0" fill="#3a2438"/>
<rect x="134.5" y="322.5" width="2.0" height="2.0" fill="#ff2020"/>
<rect x="137.5" y="319.5" width="2.0" height="2.0" fill="#ff2020"/>
<rect x="145.0" y="301.0" width="9.0" height="60.0" fill="#24182f"/>
<rect x="133.6" y="348.0" width="28.0" height="100.0" fill="#2b2240"/>
<rect x="135.0" y="352.0" width="3.0" height="1.5" fill="#3a7a88"/>
<rect x="154.0" y="352.0" width="2.0" height="1.5" fill="#3a7a88"/>
<rect x="135.0" y="356.0" width="2.0" height="1.5" fill="#3a7a88"/>
<rect x="139.0" y="356.0" width="2.0" height="1.5" fill="#3a7a88"/>
<rect x="144.0" y="356.0" width="3.0" height="1.5" fill="#3a7a88"/>
<rect x="150.0" y="356.0" width="2.0" height="1.5" fill="#3a7a88"/>
<rect x="154.0" y="356.0" width="2.0" height="1.5" fill="#3a7a88"/>
<rect x="135.0" y="360.0" width="3.0" height="1.5" fill="#3a7a88"/>
<rect x="147.0" y="360.0" width="2.0" height="1.5" fill="#3a7a88"/>
<rect x="153.0" y="360.0" width="3.0" height="1.5" fill="#3a7a88"/>
<rect x="135.0" y="364.0" width="3.0" height="1.5" fill="#3a7a88"/>
<rect x="141.0" y="364.0" width="2.0" height="1.5" fill="#3a7a88"/>
<rect x="150.0" y="364.0" width="2.0" height="1.5" fill="#3a7a88"/>
<rect x="155.0" y="364.0" width="3.0" height="1.5" fill="#3a7a88"/>
<rect x="148.0" y="368.0" width="2.0" height="1.5" fill="#3a7a88"/>
<rect x="152.0" y="368.0" width="3.0" height="1.5" fill="#3a7a88"/>
<rect x="156.0" y="368.0" width="2.0" height="1.5" fill="#3a7a88"/>
<rect x="139.0" y="372.0" width="3.0" height="1.5" fill="#3a7a88"/>
<rect x="146.0" y="372.0" width="2.0" height="1.5" fill="#3a7a88"/>
<rect x="135.0" y="376.0" width="2.0" height="1.5" fill="#3a7a88"/>
<rect x="138.0" y="376.0" width="3.0" height="1.5" fill="#3a7a88"/>
<rect x="149.0" y="376.0" width="3.0" height="1.5" fill="#3a7a88"/>
<rect x="155.0" y="376.0" width="3.0" height="1.5" fill="#3a7a88"/>
<rect x="135.0" y="380.0" width="2.0" height="1.5" fill="#3a7a88"/>
<rect x="141.0" y="380.0" width="2.0" height="1.5" fill="#3a7a88"/>
<rect x="151.0" y="380.0" width="3.0" height="1.5" fill="#3a7a88"/>
<rect x="155.0" y="380.0" width="3.0" height="1.5" fill="#3a7a88"/>
<rect x="135.0" y="384.0" width="3.0" height="1.5" fill="#3a7a88"/>
<rect x="139.0" y="384.0" width="3.0" height="1.5" fill="#3a7a88"/>
<rect x="145.0" y="384.0" width="2.0" height="1.5" fill="#3a7a88"/>
<rect x="150.0" y="384.0" width="3.0" height="1.5" fill="#3a7a88"/>
<rect x="142.0" y="388.0" width="3.0" height="1.5" fill="#3a7a88"/>
<rect x="149.0" y="388.0" width="2.0" height="1.5" fill="#3a7a88"/>
<rect x="135.0" y="392.0" width="3.0" height="1.5" fill="#3a7a88"/>
<rect x="139.0" y="392.0" width="2.0" height="1.5" fill="#3a7a88"/>
<rect x="143.0" y="392.0" width="2.0" height="1.5" fill="#3a7a88"/>
<rect x="155.0" y="392.0" width="2.0" height="1.5" fill="#3a7a88"/>
<rect x="135.0" y="396.0" width="2.0" height="1.5" fill="#3a7a88"/>
<rect x="141.0" y="396.0" width="3.0" height="1.5" fill="#3a7a88"/>
<rect x="146.0" y="396.0" width="3.0" height="1.5" fill="#3a7a88"/>
<rect x="156.0" y="396.0" width="3.0" height="1.5" fill="#3a7a88"/>
<rect x="135.0" y="400.0" width="3.0" height="1.5" fill="#3a7a88"/>
<rect x="141.0" y="400.0" width="2.0" height="1.5" fill="#3a7a88"/>
<rect x="145.0" y="400.0" width="2.0" height="1.5" fill="#3a7a88"/>
<rect x="150.0" y="400.0" width="2.0" height="1.5" fill="#3a7a88"/>
<rect x="138.0" y="404.0" width="2.0" height="1.5" fill="#3a7a88"/>
<rect x="146.0" y="404.0" width="3.0" height="1.5" fill="#3a7a88"/>
<rect x="154.0" y="404.0" width="2.0" height="1.5" fill="#3a7a88"/>
<rect x="144.0" y="408.0" width="2.0" height="1.5" fill="#3a7a88"/>
<rect x="149.0" y="408.0" width="2.0" height="1.5" fill="#3a7a88"/>
<rect x="141.0" y="412.0" width="3.0" height="1.5" fill="#3a7a88"/>
<rect x="147.0" y="412.0" width="2.0" height="1.5" fill="#3a7a88"/>
<rect x="153.0" y="412.0" width="3.0" height="1.5" fill="#3a7a88"/>
<rect x="141.0" y="416.0" width="3.0" height="1.5" fill="#3a7a88"/>
<rect x="147.0" y="416.0" width="3.0" height="1.5" fill="#3a7a88"/>
<rect x="157.0" y="416.0" width="3.0" height="1.5" fill="#3a7a88"/>
<rect x="162.5" y="384.0" width="23.5" height="60.0" fill="#2a1428"/>
<rect x="164.0" y="388.0" width="20.0" height="1.0" fill="#4a1e3c"/>
<rect x="164.0" y="391.0" width="20.0" height="1.0" fill="#4a1e3c"/>
<rect x="164.0" y="394.0" width="20.0" height="1.0" fill="#4a1e3c"/>
<rect x="164.0" y="397.0" width="20.0" height="1.0" fill="#4a1e3c"/>
<rect x="194.0" y="343.5" width="18.5" height="60.0" fill="#1d1326"/>
<rect x="194" y="343.5" width="18.5" height="50" fill="url(#diag)"/>
<rect x="216.0" y="278.0" width="43.0" height="130.0" fill="#382a4e"/>
<rect x="220.0" y="283.0" width="3.0" height="10.0" fill="#241a34"/>
<rect x="228.0" y="283.0" width="3.0" height="10.0" fill="#b4866a"/>
<rect x="236.0" y="283.0" width="3.0" height="10.0" fill="#b4866a"/>
<rect x="244.0" y="283.0" width="3.0" height="10.0" fill="#241a34"/>
<rect x="252.0" y="283.0" width="3.0" height="10.0" fill="#b4866a"/>
<rect x="220.0" y="300.0" width="3.0" height="10.0" fill="#b4866a"/>
<rect x="228.0" y="300.0" width="3.0" height="10.0" fill="#b4866a"/>
<rect x="236.0" y="300.0" width="3.0" height="10.0" fill="#b4866a"/>
<rect x="244.0" y="300.0" width="3.0" height="10.0" fill="#b4866a"/>
<rect x="252.0" y="300.0" width="3.0" height="10.0" fill="#b4866a"/>
<rect x="220.0" y="317.0" width="3.0" height="10.0" fill="#241a34"/>
<rect x="228.0" y="317.0" width="3.0" height="10.0" fill="#b4866a"/>
<rect x="236.0" y="317.0" width="3.0" height="10.0" fill="#b4866a"/>
<rect x="244.0" y="317.0" width="3.0" height="10.0" fill="#b4866a"/>
<rect x="252.0" y="317.0" width="3.0" height="10.0" fill="#241a34"/>
<rect x="220.0" y="334.0" width="3.0" height="10.0" fill="#b4866a"/>
<rect x="228.0" y="334.0" width="3.0" height="10.0" fill="#b4866a"/>
<rect x="236.0" y="334.0" width="3.0" height="10.0" fill="#241a34"/>
<rect x="244.0" y="334.0" width="3.0" height="10.0" fill="#241a34"/>
<rect x="252.0" y="334.0" width="3.0" height="10.0" fill="#b4866a"/>
<rect x="220.0" y="351.0" width="3.0" height="10.0" fill="#b4866a"/>
<rect x="228.0" y="351.0" width="3.0" height="10.0" fill="#b4866a"/>
<rect x="236.0" y="351.0" width="3.0" height="10.0" fill="#b4866a"/>
<rect x="244.0" y="351.0" width="3.0" height="10.0" fill="#b4866a"/>
<rect x="252.0" y="351.0" width="3.0" height="10.0" fill="#b4866a"/>
<rect x="220.0" y="368.0" width="3.0" height="10.0" fill="#241a34"/>
<rect x="228.0" y="368.0" width="3.0" height="10.0" fill="#241a34"/>
<rect x="236.0" y="368.0" width="3.0" height="10.0" fill="#241a34"/>
<rect x="244.0" y="368.0" width="3.0" height="10.0" fill="#b4866a"/>
<rect x="252.0" y="368.0" width="3.0" height="10.0" fill="#241a34"/>
<rect x="220.0" y="385.0" width="3.0" height="10.0" fill="#b4866a"/>
<rect x="228.0" y="385.0" width="3.0" height="10.0" fill="#241a34"/>
<rect x="236.0" y="385.0" width="3.0" height="10.0" fill="#b4866a"/>
<rect x="244.0" y="385.0" width="3.0" height="10.0" fill="#241a34"/>
<rect x="252.0" y="385.0" width="3.0" height="10.0" fill="#241a34"/>
<rect x="266.0" y="345.0" width="35.0" height="80.0" fill="#2d2038"/>
<rect x="277.0" y="349.0" width="5.0" height="1.5" fill="#9a6478"/>
<rect x="284.0" y="349.0" width="2.0" height="1.5" fill="#9a6478"/>
<rect x="288.0" y="349.0" width="5.0" height="1.5" fill="#9a6478"/>
<rect x="271.0" y="353.0" width="4.0" height="1.5" fill="#9a6478"/>
<rect x="288.0" y="353.0" width="5.0" height="1.5" fill="#9a6478"/>
<rect x="295.0" y="353.0" width="4.0" height="1.5" fill="#9a6478"/>
<rect x="268.0" y="357.0" width="5.0" height="1.5" fill="#9a6478"/>
<rect x="275.0" y="357.0" width="2.0" height="1.5" fill="#9a6478"/>
<rect x="281.0" y="357.0" width="5.0" height="1.5" fill="#9a6478"/>
<rect x="268.0" y="361.0" width="2.0" height="1.5" fill="#9a6478"/>
<rect x="273.0" y="361.0" width="5.0" height="1.5" fill="#9a6478"/>
<rect x="282.0" y="361.0" width="6.0" height="1.5" fill="#9a6478"/>
<rect x="274.0" y="365.0" width="3.0" height="1.5" fill="#9a6478"/>
<rect x="285.0" y="365.0" width="3.0" height="1.5" fill="#9a6478"/>
<rect x="268.0" y="369.0" width="3.0" height="1.5" fill="#9a6478"/>
<rect x="289.0" y="369.0" width="5.0" height="1.5" fill="#9a6478"/>
<rect x="273.0" y="373.0" width="4.0" height="1.5" fill="#9a6478"/>
<rect x="279.0" y="373.0" width="3.0" height="1.5" fill="#9a6478"/>
<rect x="291.0" y="373.0" width="4.0" height="1.5" fill="#9a6478"/>
<rect x="268.0" y="377.0" width="6.0" height="1.5" fill="#9a6478"/>
<rect x="283.0" y="377.0" width="4.0" height="1.5" fill="#9a6478"/>
<rect x="290.0" y="377.0" width="6.0" height="1.5" fill="#9a6478"/>
<rect x="268.0" y="381.0" width="2.0" height="1.5" fill="#9a6478"/>
<rect x="268.0" y="385.0" width="3.0" height="1.5" fill="#9a6478"/>
<rect x="275.0" y="385.0" width="5.0" height="1.5" fill="#9a6478"/>
<rect x="281.0" y="385.0" width="3.0" height="1.5" fill="#9a6478"/>
<rect x="285.0" y="385.0" width="2.0" height="1.5" fill="#9a6478"/>
<rect x="290.0" y="385.0" width="4.0" height="1.5" fill="#9a6478"/>
<rect x="268.0" y="389.0" width="6.0" height="1.5" fill="#9a6478"/>
<rect x="277.0" y="389.0" width="6.0" height="1.5" fill="#9a6478"/>
<rect x="294.0" y="389.0" width="3.0" height="1.5" fill="#9a6478"/>
<rect x="268.0" y="393.0" width="3.0" height="1.5" fill="#9a6478"/>
<rect x="278.0" y="397.0" width="3.0" height="1.5" fill="#9a6478"/>
<rect x="282.0" y="397.0" width="2.0" height="1.5" fill="#9a6478"/>
<rect x="285.0" y="397.0" width="5.0" height="1.5" fill="#9a6478"/>
<rect x="268.0" y="401.0" width="3.0" height="1.5" fill="#9a6478"/>
<rect x="275.0" y="401.0" width="6.0" height="1.5" fill="#9a6478"/>
<rect x="284.0" y="401.0" width="2.0" height="1.5" fill="#9a6478"/>
<rect x="274.0" y="405.0" width="3.0" height="1.5" fill="#9a6478"/>
<rect x="278.0" y="405.0" width="4.0" height="1.5" fill="#9a6478"/>
<rect x="283.0" y="405.0" width="2.0" height="1.5" fill="#9a6478"/>
<rect x="288.0" y="405.0" width="2.0" height="1.5" fill="#9a6478"/>
<rect x="268.0" y="409.0" width="3.0" height="1.5" fill="#9a6478"/>
<rect x="272.0" y="409.0" width="3.0" height="1.5" fill="#9a6478"/>
<rect x="289.0" y="409.0" width="6.0" height="1.5" fill="#9a6478"/>
<rect x="274.0" y="413.0" width="2.0" height="1.5" fill="#9a6478"/>
<rect x="268.0" y="417.0" width="2.0" height="1.5" fill="#9a6478"/>
<rect x="284.0" y="417.0" width="2.0" height="1.5" fill="#9a6478"/>
<rect x="301.0" y="395.0" width="38.0" height="40.0" fill="#1c1322"/>
<rect x="305.0" y="398.0" width="2.0" height="2.0" fill="#a02020"/>
<rect x="-6.0" y="446.0" width="346.0" height="110.0" fill="#0f0f13"/>
<rect x="-6.0" y="420.0" width="120.0" height="35.0" fill="#2a2236"/>
<rect x="10.0" y="423.0" width="2.0" height="1.5" fill="#6e6c98"/>
<rect x="13.0" y="423.0" width="2.0" height="1.5" fill="#6e6c98"/>
<rect x="24.0" y="423.0" width="2.0" height="1.5" fill="#6e6c98"/>
<rect x="28.0" y="423.0" width="3.0" height="1.5" fill="#6e6c98"/>
<rect x="35.0" y="423.0" width="3.0" height="1.5" fill="#6e6c98"/>
<rect x="41.0" y="423.0" width="3.0" height="1.5" fill="#6e6c98"/>
<rect x="58.0" y="423.0" width="3.0" height="1.5" fill="#6e6c98"/>
<rect x="77.0" y="423.0" width="3.0" height="1.5" fill="#6e6c98"/>
<rect x="86.0" y="423.0" width="2.0" height="1.5" fill="#6e6c98"/>
<rect x="0.0" y="428.0" width="3.0" height="1.5" fill="#6e6c98"/>
<rect x="8.0" y="428.0" width="4.0" height="1.5" fill="#6e6c98"/>
<rect x="21.0" y="428.0" width="3.0" height="1.5" fill="#6e6c98"/>
<rect x="37.0" y="428.0" width="3.0" height="1.5" fill="#6e6c98"/>
<rect x="57.0" y="428.0" width="4.0" height="1.5" fill="#6e6c98"/>
<rect x="69.0" y="428.0" width="4.0" height="1.5" fill="#6e6c98"/>
<rect x="82.0" y="428.0" width="4.0" height="1.5" fill="#6e6c98"/>
<rect x="88.0" y="428.0" width="4.0" height="1.5" fill="#6e6c98"/>
<rect x="95.0" y="428.0" width="2.0" height="1.5" fill="#6e6c98"/>
<rect x="106.0" y="428.0" width="2.0" height="1.5" fill="#6e6c98"/>
<rect x="7.0" y="433.0" width="3.0" height="1.5" fill="#6e6c98"/>
<rect x="11.0" y="433.0" width="3.0" height="1.5" fill="#6e6c98"/>
<rect x="18.0" y="433.0" width="3.0" height="1.5" fill="#6e6c98"/>
<rect x="31.0" y="433.0" width="3.0" height="1.5" fill="#6e6c98"/>
<rect x="42.0" y="433.0" width="4.0" height="1.5" fill="#6e6c98"/>
<rect x="62.0" y="433.0" width="4.0" height="1.5" fill="#6e6c98"/>
<rect x="92.0" y="433.0" width="3.0" height="1.5" fill="#6e6c98"/>
<rect x="105.0" y="433.0" width="4.0" height="1.5" fill="#6e6c98"/>
<rect x="4.0" y="438.0" width="2.0" height="1.5" fill="#6e6c98"/>
<rect x="12.0" y="438.0" width="4.0" height="1.5" fill="#6e6c98"/>
<rect x="20.0" y="438.0" width="4.0" height="1.5" fill="#6e6c98"/>
<rect x="28.0" y="438.0" width="4.0" height="1.5" fill="#6e6c98"/>
<rect x="35.0" y="438.0" width="4.0" height="1.5" fill="#6e6c98"/>
<rect x="58.0" y="438.0" width="4.0" height="1.5" fill="#6e6c98"/>
<rect x="65.0" y="438.0" width="3.0" height="1.5" fill="#6e6c98"/>
<rect x="82.0" y="438.0" width="4.0" height="1.5" fill="#6e6c98"/>
<rect x="101.0" y="438.0" width="4.0" height="1.5" fill="#6e6c98"/>
<rect x="107.0" y="438.0" width="2.0" height="1.5" fill="#6e6c98"/>
<rect x="5.0" y="443.0" width="3.0" height="1.5" fill="#6e6c98"/>
<rect x="28.0" y="443.0" width="3.0" height="1.5" fill="#6e6c98"/>
<rect x="54.0" y="443.0" width="2.0" height="1.5" fill="#6e6c98"/>
<rect x="79.0" y="443.0" width="2.0" height="1.5" fill="#6e6c98"/>
<rect x="0.0" y="448.0" width="4.0" height="1.5" fill="#6e6c98"/>
<rect x="51.0" y="448.0" width="3.0" height="1.5" fill="#6e6c98"/>
<rect x="58.0" y="448.0" width="4.0" height="1.5" fill="#6e6c98"/>
<rect x="70.0" y="448.0" width="4.0" height="1.5" fill="#6e6c98"/>
<rect x="83.0" y="448.0" width="2.0" height="1.5" fill="#6e6c98"/>
<rect x="89.0" y="448.0" width="4.0" height="1.5" fill="#6e6c98"/>
<rect x="94.0" y="448.0" width="4.0" height="1.5" fill="#6e6c98"/>
<rect x="110.0" y="424.0" width="78.0" height="20.0" fill="#2a2236"/>
<rect x="125.0" y="426.0" width="3.0" height="1.5" fill="#6e6c98"/>
<rect x="132.0" y="426.0" width="3.0" height="1.5" fill="#6e6c98"/>
<rect x="138.0" y="426.0" width="4.0" height="1.5" fill="#6e6c98"/>
<rect x="149.0" y="426.0" width="3.0" height="1.5" fill="#6e6c98"/>
<rect x="158.0" y="426.0" width="2.0" height="1.5" fill="#6e6c98"/>
<rect x="172.0" y="426.0" width="3.0" height="1.5" fill="#6e6c98"/>
<rect x="131.0" y="431.0" width="4.0" height="1.5" fill="#6e6c98"/>
<rect x="136.0" y="431.0" width="2.0" height="1.5" fill="#6e6c98"/>
<rect x="147.0" y="431.0" width="4.0" height="1.5" fill="#6e6c98"/>
<rect x="167.0" y="431.0" width="3.0" height="1.5" fill="#6e6c98"/>
<rect x="171.0" y="431.0" width="3.0" height="1.5" fill="#6e6c98"/>
<rect x="130.0" y="436.0" width="3.0" height="1.5" fill="#6e6c98"/>
<rect x="157.0" y="436.0" width="2.0" height="1.5" fill="#6e6c98"/>
<rect x="160.0" y="436.0" width="2.0" height="1.5" fill="#6e6c98"/>
<rect x="187.0" y="394.0" width="83.0" height="52.0" fill="#2c2440"/>
<rect x="187.0" y="446.0" width="83.0" height="54.0" fill="#221c30"/>
<rect x="227.0" y="460.0" width="2.0" height="3.0" fill="#3c3c5a"/>
<rect x="230.0" y="460.0" width="8.0" height="3.0" fill="#3c3c5a"/>
<rect x="190.0" y="470.0" width="3.0" height="3.0" fill="#3c3c5a"/>
<rect x="195.0" y="470.0" width="8.0" height="3.0" fill="#3c3c5a"/>
<rect x="216.0" y="470.0" width="6.0" height="3.0" fill="#3c3c5a"/>
<rect x="240.0" y="470.0" width="8.0" height="3.0" fill="#3c3c5a"/>
<rect x="260.0" y="470.0" width="2.0" height="3.0" fill="#3c3c5a"/>
<rect x="190.0" y="482.0" width="8.0" height="3.0" fill="#3c3c5a"/>
<rect x="228.0" y="482.0" width="8.0" height="3.0" fill="#3c3c5a"/>
<rect x="190.0" y="493.0" width="10.0" height="3.0" fill="#3c3c5a"/>
<rect x="203.0" y="493.0" width="3.0" height="3.0" fill="#3c3c5a"/>
<rect x="209.0" y="493.0" width="10.0" height="3.0" fill="#3c3c5a"/>
<rect x="221.0" y="493.0" width="5.0" height="3.0" fill="#3c3c5a"/>
<rect x="254.0" y="493.0" width="5.0" height="3.0" fill="#3c3c5a"/>
<rect x="187.0" y="500.0" width="83.0" height="50.0" fill="#130f19"/>
<rect x="192.0" y="502.0" width="2.0" height="40.0" fill="#20140f"/>
<rect x="201.0" y="502.0" width="2.0" height="40.0" fill="#20140f"/>
<rect x="210.0" y="502.0" width="2.0" height="40.0" fill="#20140f"/>
<rect x="219.0" y="502.0" width="2.0" height="40.0" fill="#20140f"/>
<rect x="228.0" y="502.0" width="2.0" height="40.0" fill="#20140f"/>
<rect x="237.0" y="502.0" width="2.0" height="40.0" fill="#20140f"/>
<rect x="246.0" y="502.0" width="2.0" height="40.0" fill="#20140f"/>
<rect x="255.0" y="502.0" width="2.0" height="40.0" fill="#20140f"/>
<rect x="264.0" y="502.0" width="2.0" height="40.0" fill="#20140f"/>
<path d="M262 418 L282 410 L339 420 L339 560 L262 560 Z" fill="#221d30"/>
<rect x="274.0" y="420.0" width="3.0" height="1.5" fill="#357a35"/>
<rect x="278.0" y="420.0" width="4.0" height="1.5" fill="#357a35"/>
<rect x="283.0" y="420.0" width="2.0" height="1.5" fill="#357a35"/>
<rect x="298.0" y="420.0" width="8.0" height="1.5" fill="#357a35"/>
<rect x="328.0" y="420.0" width="2.0" height="1.5" fill="#357a35"/>
<rect x="287.0" y="425.0" width="4.0" height="1.5" fill="#357a35"/>
<rect x="293.0" y="425.0" width="7.0" height="1.5" fill="#357a35"/>
<rect x="315.0" y="425.0" width="3.0" height="1.5" fill="#357a35"/>
<rect x="321.0" y="425.0" width="4.0" height="1.5" fill="#357a35"/>
<rect x="278.0" y="430.0" width="2.0" height="1.5" fill="#357a35"/>
<rect x="283.0" y="430.0" width="8.0" height="1.5" fill="#357a35"/>
<rect x="284.0" y="435.0" width="7.0" height="1.5" fill="#357a35"/>
<rect x="301.0" y="435.0" width="8.0" height="1.5" fill="#357a35"/>
<rect x="318.0" y="435.0" width="8.0" height="1.5" fill="#357a35"/>
<rect x="295.0" y="440.0" width="2.0" height="1.5" fill="#357a35"/>
<rect x="307.0" y="440.0" width="5.0" height="1.5" fill="#357a35"/>
<rect x="316.0" y="440.0" width="5.0" height="1.5" fill="#357a35"/>
<rect x="266.0" y="445.0" width="2.0" height="1.5" fill="#357a35"/>
<rect x="281.0" y="445.0" width="5.0" height="1.5" fill="#357a35"/>
<rect x="305.0" y="445.0" width="6.0" height="1.5" fill="#357a35"/>
<rect x="327.0" y="445.0" width="5.0" height="1.5" fill="#357a35"/>
<rect x="266.0" y="450.0" width="7.0" height="1.5" fill="#357a35"/>
<rect x="274.0" y="450.0" width="8.0" height="1.5" fill="#357a35"/>
<rect x="286.0" y="450.0" width="8.0" height="1.5" fill="#357a35"/>
<rect x="301.0" y="450.0" width="6.0" height="1.5" fill="#357a35"/>
<rect x="-6.0" y="440.0" width="16.0" height="90.0" fill="#1c1a26"/>
<rect x="-5.0" y="442.0" width="2.0" height="1.5" fill="#2e6a30"/>
<rect x="-5.0" y="448.0" width="3.0" height="1.5" fill="#2e6a30"/>
<rect x="1.0" y="448.0" width="2.0" height="1.5" fill="#2e6a30"/>
<rect x="6.0" y="448.0" width="2.0" height="1.5" fill="#2e6a30"/>
<rect x="-5.0" y="454.0" width="2.0" height="1.5" fill="#2e6a30"/>
<rect x="-5.0" y="460.0" width="2.0" height="1.5" fill="#2e6a30"/>
<rect x="4.0" y="460.0" width="3.0" height="1.5" fill="#2e6a30"/>
<rect x="0.0" y="466.0" width="2.0" height="1.5" fill="#2e6a30"/>
<rect x="3.0" y="466.0" width="2.0" height="1.5" fill="#2e6a30"/>
<rect x="-5.0" y="472.0" width="4.0" height="1.5" fill="#2e6a30"/>
<rect x="1.0" y="478.0" width="2.0" height="1.5" fill="#2e6a30"/>
<rect x="3.0" y="484.0" width="2.0" height="1.5" fill="#2e6a30"/>
<rect x="0.0" y="490.0" width="3.0" height="1.5" fill="#2e6a30"/>
<rect x="-5.0" y="496.0" width="5.0" height="1.5" fill="#2e6a30"/>
<rect x="1.0" y="502.0" width="4.0" height="1.5" fill="#2e6a30"/>
<rect x="6.0" y="514.0" width="3.0" height="1.5" fill="#2e6a30"/>
<rect x="10.0" y="451.7" width="100.0" height="100.0" fill="#141418"/>
<rect x="14.0" y="459.0" width="3.0" height="2.0" fill="#2c3e46"/>
<rect x="31.0" y="459.0" width="4.0" height="2.0" fill="#2c3e46"/>
<rect x="57.0" y="459.0" width="12.0" height="2.0" fill="#2c3e46"/>
<rect x="14.0" y="467.0" width="11.0" height="2.0" fill="#2c3e46"/>
<rect x="26.0" y="467.0" width="10.0" height="2.0" fill="#2c3e46"/>
<rect x="38.0" y="467.0" width="2.0" height="2.0" fill="#2c3e46"/>
<rect x="61.0" y="467.0" width="9.0" height="2.0" fill="#2c3e46"/>
<rect x="72.0" y="467.0" width="16.0" height="2.0" fill="#2c3e46"/>
<rect x="92.0" y="467.0" width="11.0" height="2.0" fill="#2c3e46"/>
<rect x="14.0" y="475.0" width="13.0" height="2.0" fill="#2c3e46"/>
<rect x="47.0" y="475.0" width="12.0" height="2.0" fill="#2c3e46"/>
<rect x="88.0" y="475.0" width="2.0" height="2.0" fill="#2c3e46"/>
<rect x="101.0" y="475.0" width="5.0" height="2.0" fill="#2c3e46"/>
<rect x="31.0" y="483.0" width="6.0" height="2.0" fill="#2c3e46"/>
<rect x="39.0" y="483.0" width="6.0" height="2.0" fill="#2c3e46"/>
<rect x="66.0" y="483.0" width="15.0" height="2.0" fill="#2c3e46"/>
<rect x="82.0" y="483.0" width="10.0" height="2.0" fill="#2c3e46"/>
<rect x="94.0" y="483.0" width="8.0" height="2.0" fill="#2c3e46"/>
<rect x="80.0" y="491.0" width="9.0" height="2.0" fill="#2c3e46"/>
<rect x="35.0" y="499.0" width="7.0" height="2.0" fill="#2c3e46"/>
<rect x="46.0" y="499.0" width="12.0" height="2.0" fill="#2c3e46"/>
<rect x="62.0" y="499.0" width="8.0" height="2.0" fill="#2c3e46"/>
<rect x="72.0" y="499.0" width="10.0" height="2.0" fill="#2c3e46"/>
<rect x="14.0" y="507.0" width="7.0" height="2.0" fill="#2c3e46"/>
<rect x="42.0" y="507.0" width="2.0" height="2.0" fill="#2c3e46"/>
<rect x="18.0" y="515.0" width="3.0" height="2.0" fill="#2c3e46"/>
<rect x="39.0" y="515.0" width="16.0" height="2.0" fill="#2c3e46"/>
<rect x="59.0" y="515.0" width="9.0" height="2.0" fill="#2c3e46"/>
<rect x="85.0" y="515.0" width="4.0" height="2.0" fill="#2c3e46"/>
<rect x="103.0" y="515.0" width="3.0" height="2.0" fill="#2c3e46"/>
<rect x="113.0" y="439.6" width="77.0" height="110.0" fill="#131317"/>
<rect x="116.0" y="447.0" width="4.0" height="4.0" fill="#2a4048"/>
<rect x="122.0" y="447.0" width="5.0" height="4.0" fill="#2a4048"/>
<rect x="128.0" y="447.0" width="3.0" height="4.0" fill="#2a4048"/>
<rect x="132.0" y="447.0" width="8.0" height="4.0" fill="#2a4048"/>
<rect x="148.0" y="447.0" width="6.0" height="4.0" fill="#2a4048"/>
<rect x="159.0" y="447.0" width="4.0" height="4.0" fill="#2a4048"/>
<rect x="166.0" y="447.0" width="4.0" height="4.0" fill="#2a4048"/>
<rect x="174.0" y="447.0" width="3.0" height="4.0" fill="#2a4048"/>
<rect x="178.0" y="447.0" width="2.0" height="4.0" fill="#2a4048"/>
<rect x="128.0" y="456.0" width="6.0" height="4.0" fill="#2a4048"/>
<rect x="141.0" y="456.0" width="7.0" height="4.0" fill="#2a4048"/>
<rect x="152.0" y="456.0" width="2.0" height="4.0" fill="#2a4048"/>
<rect x="158.0" y="456.0" width="2.0" height="4.0" fill="#2a4048"/>
<rect x="162.0" y="456.0" width="5.0" height="4.0" fill="#2a4048"/>
<rect x="169.0" y="456.0" width="4.0" height="4.0" fill="#2a4048"/>
<rect x="177.0" y="456.0" width="6.0" height="4.0" fill="#2a4048"/>
<rect x="133.0" y="465.0" width="8.0" height="4.0" fill="#2a4048"/>
<rect x="149.0" y="465.0" width="3.0" height="4.0" fill="#2a4048"/>
<rect x="155.0" y="465.0" width="8.0" height="4.0" fill="#2a4048"/>
<rect x="166.0" y="465.0" width="8.0" height="4.0" fill="#2a4048"/>
<rect x="175.0" y="465.0" width="7.0" height="4.0" fill="#2a4048"/>
<rect x="116.0" y="474.0" width="7.0" height="4.0" fill="#2a4048"/>
<rect x="124.0" y="474.0" width="3.0" height="4.0" fill="#2a4048"/>
<rect x="130.0" y="474.0" width="5.0" height="4.0" fill="#2a4048"/>
<rect x="139.0" y="474.0" width="6.0" height="4.0" fill="#2a4048"/>
<rect x="149.0" y="474.0" width="2.0" height="4.0" fill="#2a4048"/>
<rect x="161.0" y="474.0" width="4.0" height="4.0" fill="#2a4048"/>
<rect x="168.0" y="474.0" width="4.0" height="4.0" fill="#2a4048"/>
<rect x="176.0" y="474.0" width="5.0" height="4.0" fill="#2a4048"/>
<rect x="125.0" y="483.0" width="5.0" height="4.0" fill="#2a4048"/>
<rect x="134.0" y="483.0" width="5.0" height="4.0" fill="#2a4048"/>
<rect x="150.0" y="483.0" width="9.0" height="4.0" fill="#2a4048"/>
<rect x="162.0" y="483.0" width="5.0" height="4.0" fill="#2a4048"/>
<rect x="174.0" y="483.0" width="3.0" height="4.0" fill="#2a4048"/>
<rect x="180.0" y="483.0" width="6.0" height="4.0" fill="#2a4048"/>
<rect x="116.0" y="492.0" width="6.0" height="4.0" fill="#2a4048"/>
<rect x="129.0" y="492.0" width="7.0" height="4.0" fill="#2a4048"/>
<rect x="137.0" y="492.0" width="3.0" height="4.0" fill="#2a4048"/>
<rect x="143.0" y="492.0" width="6.0" height="4.0" fill="#2a4048"/>
<rect x="152.0" y="492.0" width="3.0" height="4.0" fill="#2a4048"/>
<rect x="157.0" y="492.0" width="8.0" height="4.0" fill="#2a4048"/>
<rect x="180.0" y="492.0" width="6.0" height="4.0" fill="#2a4048"/>
<rect x="124.0" y="501.0" width="9.0" height="4.0" fill="#2a4048"/>
<rect x="145.0" y="501.0" width="4.0" height="4.0" fill="#2a4048"/>
<rect x="158.0" y="501.0" width="8.0" height="4.0" fill="#2a4048"/>
<rect x="168.0" y="501.0" width="8.0" height="4.0" fill="#2a4048"/>
<rect x="179.0" y="501.0" width="4.0" height="4.0" fill="#2a4048"/>
<rect x="124.0" y="510.0" width="5.0" height="4.0" fill="#2a4048"/>
<rect x="143.0" y="510.0" width="2.0" height="4.0" fill="#2a4048"/>
<rect x="157.0" y="510.0" width="7.0" height="4.0" fill="#2a4048"/>
<rect x="167.0" y="510.0" width="3.0" height="4.0" fill="#2a4048"/>
<rect x="174.0" y="510.0" width="5.0" height="4.0" fill="#2a4048"/>
<rect x="153.0" y="519.0" width="6.0" height="4.0" fill="#2a4048"/>
<rect x="161.0" y="519.0" width="5.0" height="4.0" fill="#2a4048"/>
<rect x="168.0" y="519.0" width="2.0" height="4.0" fill="#2a4048"/>
<rect x="173.0" y="519.0" width="8.0" height="4.0" fill="#2a4048"/>
<rect x="190.0" y="408.0" width="4.0" height="3.0" fill="#7c84ac"/>
<rect x="198.0" y="408.0" width="9.0" height="3.0" fill="#7c84ac"/>
<rect x="209.0" y="408.0" width="2.0" height="3.0" fill="#7c84ac"/>
<rect x="222.0" y="408.0" width="6.0" height="3.0" fill="#7c84ac"/>
<rect x="230.0" y="408.0" width="5.0" height="3.0" fill="#7c84ac"/>
<rect x="236.0" y="408.0" width="10.0" height="3.0" fill="#7c84ac"/>
<rect x="248.0" y="408.0" width="4.0" height="3.0" fill="#7c84ac"/>
<rect x="190.0" y="418.0" width="6.0" height="3.0" fill="#7c84ac"/>
<rect x="200.0" y="418.0" width="5.0" height="3.0" fill="#7c84ac"/>
<rect x="208.0" y="418.0" width="6.0" height="3.0" fill="#7c84ac"/>
<rect x="228.0" y="418.0" width="7.0" height="3.0" fill="#7c84ac"/>
<rect x="238.0" y="418.0" width="6.0" height="3.0" fill="#7c84ac"/>
<rect x="245.0" y="418.0" width="2.0" height="3.0" fill="#7c84ac"/>
<rect x="257.0" y="418.0" width="6.0" height="3.0" fill="#7c84ac"/>
<rect x="190.0" y="429.0" width="8.0" height="3.0" fill="#7c84ac"/>
<rect x="201.0" y="429.0" width="2.0" height="3.0" fill="#7c84ac"/>
<rect x="213.0" y="429.0" width="5.0" height="3.0" fill="#7c84ac"/>
<rect x="223.0" y="429.0" width="6.0" height="3.0" fill="#7c84ac"/>
<rect x="237.0" y="429.0" width="7.0" height="3.0" fill="#7c84ac"/>
<rect x="247.0" y="429.0" width="7.0" height="3.0" fill="#7c84ac"/>
<rect x="190.0" y="439.0" width="5.0" height="3.0" fill="#7c84ac"/>
<rect x="206.0" y="439.0" width="9.0" height="3.0" fill="#7c84ac"/>
<rect x="230.0" y="439.0" width="4.0" height="3.0" fill="#7c84ac"/>
<rect x="245.0" y="439.0" width="9.0" height="3.0" fill="#7c84ac"/>
<rect x="257.0" y="439.0" width="2.0" height="3.0" fill="#7c84ac"/>
<rect x="263.0" y="439.0" width="3.0" height="3.0" fill="#7c84ac"/>
<rect x="270.0" y="452.8" width="70.0" height="100.0" fill="#131317"/>
<rect x="285.0" y="456.0" width="7.0" height="2.0" fill="#55552a"/>
<rect x="300.0" y="456.0" width="6.0" height="2.0" fill="#55552a"/>
<rect x="307.0" y="456.0" width="6.0" height="2.0" fill="#55552a"/>
<rect x="293.0" y="463.0" width="8.0" height="2.0" fill="#55552a"/>
<rect x="305.0" y="463.0" width="7.0" height="2.0" fill="#55552a"/>
<rect x="333.0" y="463.0" width="5.0" height="2.0" fill="#55552a"/>
<rect x="289.0" y="477.0" width="6.0" height="2.0" fill="#55552a"/>
<rect x="308.0" y="477.0" width="5.0" height="2.0" fill="#55552a"/>
<rect x="316.0" y="477.0" width="2.0" height="2.0" fill="#55552a"/>
<rect x="320.0" y="477.0" width="5.0" height="2.0" fill="#55552a"/>
<rect x="272.0" y="484.0" width="6.0" height="2.0" fill="#55552a"/>
<rect x="296.0" y="484.0" width="8.0" height="2.0" fill="#55552a"/>
<rect x="272.0" y="491.0" width="7.0" height="2.0" fill="#55552a"/>
<rect x="304.0" y="491.0" width="2.0" height="2.0" fill="#55552a"/>
<rect x="309.0" y="491.0" width="3.0" height="2.0" fill="#55552a"/>
<rect x="327.0" y="491.0" width="8.0" height="2.0" fill="#55552a"/>
<rect x="281.0" y="498.0" width="5.0" height="2.0" fill="#55552a"/>
<rect x="296.0" y="498.0" width="8.0" height="2.0" fill="#55552a"/>
<rect x="305.0" y="498.0" width="2.0" height="2.0" fill="#55552a"/>
<rect x="272.0" y="505.0" width="4.0" height="2.0" fill="#55552a"/>
<rect x="283.0" y="505.0" width="3.0" height="2.0" fill="#55552a"/>
<rect x="308.0" y="505.0" width="2.0" height="2.0" fill="#55552a"/>
<rect x="314.0" y="505.0" width="4.0" height="2.0" fill="#55552a"/>
<rect x="326.0" y="505.0" width="7.0" height="2.0" fill="#55552a"/>
<rect x="289.0" y="512.0" width="7.0" height="2.0" fill="#55552a"/>
<rect x="297.0" y="512.0" width="8.0" height="2.0" fill="#55552a"/>
<rect x="333.0" y="512.0" width="5.0" height="2.0" fill="#55552a"/>
<rect x="289.0" y="519.0" width="4.0" height="2.0" fill="#55552a"/>
<rect x="296.0" y="519.0" width="7.0" height="2.0" fill="#55552a"/>
<rect x="315.0" y="519.0" width="8.0" height="2.0" fill="#55552a"/>
<rect x="326.0" y="519.0" width="3.0" height="2.0" fill="#55552a"/>
<rect x="305.0" y="526.0" width="6.0" height="2.0" fill="#55552a"/>
<rect x="-10" y="505" width="360" height="47" fill="url(#lowfade)"/></g>
<g id="gt"><rect x="0" y="0" width="24.2" height="24" fill="#da7c0e"/><rect x="0" y="0" width="24.2" height="3" fill="#42f062"/><rect x="0" y="3" width="24.2" height="2.6" fill="#a81e08"/><rect x="4" y="2.4" width="1.3" height="1.3" fill="#111"/><rect x="10" y="2.4" width="1.3" height="1.3" fill="#111"/><rect x="16" y="2.4" width="1.3" height="1.3" fill="#111"/><rect x="22" y="2.4" width="1.3" height="1.3" fill="#111"/><rect x="7.5" y="4.4" width="1.2" height="1.2" fill="#40d050"/><rect x="13.5" y="4.4" width="1.2" height="1.2" fill="#40d050"/><rect x="4.1" y="10" width="1.2" height="6" fill="#6e3c08"/><rect x="4.9" y="11" width="14.4" height="1.5" fill="#6e3c08"/><rect x="3.3" y="14.7" width="6.6" height="5.6" fill="#6e3c08"/><rect x="14.4" y="9.2" width="2.9" height="7.8" fill="#6e3c08"/><rect x="7.5" y="6.3" width="2.4" height="2.7" fill="#6e3c08"/><rect x="8.3" y="18" width="2.9" height="2.6" rx="1" fill="#000"/><rect x="0" y="21" width="24.2" height="2.2" fill="#ff2a10"/><rect x="0" y="23.2" width="24.2" height="0.8" fill="#000"/><rect x="1" y="0" width="1.4" height="23.2" fill="#ff1a10"/><rect x="19.2" y="0" width="1.4" height="23.2" fill="#ff1a10"/></g>
</defs>
<rect x="362" y="56" width="748" height="703" fill="#a0a0a0"/><rect x="362" y="56" width="748" height="1" fill="#a8a8a8"/>
<g clip-path="url(#scene)">
<rect x="362" y="208" width="748" height="366" fill="url(#sky)"/>
<use href="#ct" x="7" y="0"/>
<use href="#ct" x="347" y="0"/>
<use href="#ct" x="687" y="0"/>
<use href="#ct" x="1027" y="0"/>
<rect x="362" y="548" width="748" height="26" fill="#050508"/>
<use href="#gt" x="444.0" y="550"/>
<use href="#gt" x="468.1" y="550"/>
<use href="#gt" x="492.2" y="550"/>
<use href="#gt" x="516.3" y="550"/>
<use href="#gt" x="540.4" y="550"/>
<use href="#gt" x="564.5" y="550"/>
<use href="#gt" x="588.6" y="550"/>
<use href="#gt" x="612.7" y="550"/>
<use href="#gt" x="636.8" y="550"/>
<use href="#gt" x="660.9" y="550"/>
<use href="#gt" x="685.0" y="550"/>
<use href="#gt" x="709.1" y="550"/>
<use href="#gt" x="733.2" y="550"/>
<use href="#gt" x="757.3" y="550"/>
<use href="#gt" x="781.4" y="550"/>
<use href="#gt" x="805.5" y="550"/>
<use href="#gt" x="829.6" y="550"/>
<use href="#gt" x="853.7" y="550"/>
<use href="#gt" x="877.8" y="550"/>
<use href="#gt" x="901.9" y="550"/>
<use href="#gt" x="926.0" y="550"/>
<use href="#gt" x="950.1" y="550"/>
<use href="#gt" x="1021.5" y="550"/>
<use href="#gt" x="1045.6" y="550"/>
<use href="#gt" x="1069.7" y="550"/>
<use href="#gt" x="1093.8" y="550"/>
<use href="#gt" x="444" y="526"/>
<clipPath id="slope"><path d="M468 526 L516 550 L468 550 Z"/></clipPath>
<g clip-path="url(#slope)"><use href="#gt" x="468" y="526"/><use href="#gt" x="492.1" y="526"/></g>
<path d="M467 525.5 L516 550.5" stroke="#ff1e10" stroke-width="1.6"/>
<path d="M469 529.5 L512 551" stroke="#44f060" stroke-width="1.2" stroke-dasharray="1.5 1.5"/>
<rect x="444" y="546.5" width="24" height="1.2" fill="#ff1e10"/>
<rect x="444.5" y="428.0" width="17" height="24.4" fill="#f4f4f6"/>
<rect x="448.5" y="433.0" width="9" height="12" fill="#c6c6cc"/>
<rect x="459.5" y="429.0" width="2" height="22" fill="#b4b4b8"/>
<rect x="444.5" y="450.0" width="17" height="1" fill="#9a9aa0"/>
<rect x="444.5" y="452.4" width="17" height="24.4" fill="#f4f4f6"/>
<rect x="448.5" y="457.4" width="9" height="12" fill="#c6c6cc"/>
<rect x="459.5" y="453.4" width="2" height="22" fill="#b4b4b8"/>
<rect x="444.5" y="474.4" width="17" height="1" fill="#9a9aa0"/>
<rect x="444.5" y="476.9" width="17" height="24.4" fill="#f4f4f6"/>
<rect x="448.5" y="481.9" width="9" height="12" fill="#c6c6cc"/>
<rect x="459.5" y="477.9" width="2" height="22" fill="#b4b4b8"/>
<rect x="444.5" y="498.9" width="17" height="1" fill="#9a9aa0"/>
<rect x="444.5" y="501.4" width="17" height="24.4" fill="#f4f4f6"/>
<rect x="448.5" y="506.4" width="9" height="12" fill="#c6c6cc"/>
<rect x="459.5" y="502.4" width="2" height="22" fill="#b4b4b8"/>
<rect x="444.5" y="523.4" width="17" height="1" fill="#9a9aa0"/>
<path d="M901 526 L926 550 L878 550 Z" fill="#050505"/>
<path d="M901 528 L909 539 L893 539 Z" fill="#6a34a8"/>
<path d="M886 549 L890 544 L912 544 L916 549 Z" fill="#5a2a98"/>
<path d="M894 544 L908 544 L906 547 L896 547 Z" fill="#050505"/>
<path d="M901 526 L926 550 M901 526 L878 550" stroke="#eaa6ea" stroke-width="1.8"/>
<path d="M898 530 L893 536 L897 536 Z" fill="#eaa6ea"/>
<path d="M778.3 475.7 L1021 549.9 L1018.3 560.2 L775.6 485.7 Z" fill="#5a2a12" stroke="#ff4a14" stroke-width="1.6" stroke-dasharray="3 1"/>
<circle cx="898" cy="516" r="6" fill="none" stroke="#666a80" stroke-width="1.2" opacity="0.7"/><circle cx="898" cy="516" r="3" fill="none" stroke="#666a80" stroke-width="1" opacity="0.7"/>
</g>
<path d="M371.50 57V759 M395.60 57V759 M419.70 57V759 M443.80 57V759 M467.90 57V759 M492.00 57V759 M516.10 57V759 M540.20 57V759 M564.30 57V759 M588.40 57V759 M612.50 57V759 M636.60 57V759 M660.70 57V759 M684.80 57V759 M708.90 57V759 M733.00 57V759 M757.10 57V759 M781.20 57V759 M805.30 57V759 M829.40 57V759 M853.50 57V759 M877.60 57V759 M901.70 57V759 M925.80 57V759 M949.90 57V759 M974.00 57V759 M998.10 57V759 M1022.20 57V759 M1046.30 57V759 M1070.40 57V759 M1094.50 57V759 M362 61.50H1110 M362 85.50H1110 M362 110.50H1110 M362 134.50H1110 M362 159.50H1110 M362 183.50H1110 M362 208.50H1110 M362 232.50H1110 M362 257.50H1110 M362 281.50H1110 M362 306.50H1110 M362 330.50H1110 M362 355.50H1110 M362 379.50H1110 M362 403.50H1110 M362 428.50H1110 M362 452.50H1110 M362 477.50H1110 M362 501.50H1110 M362 526.50H1110 M362 550.50H1110 M362 575.50H1110 M362 599.50H1110 M362 624.50H1110 M362 648.50H1110 M362 673.50H1110 M362 697.50H1110 M362 721.50H1110 M362 746.50H1110" stroke="#2a3a80" stroke-opacity="0.6" stroke-width="1"/>
<path d="M362 208H1110 M362 574H1110" stroke="#f08a1e" stroke-width="2" stroke-dasharray="12 9" stroke-dashoffset="3"/>
<path d="M588.5 208V542 M1070.5 208V542" stroke="#f08a1e" stroke-width="1.2" stroke-dasharray="12.5 9"/>
</svg>
<!--/canvas-->
<!--center-->
<!-- layer tabs -->
<div class="a" style="left:362px;top:32px;width:766px;height:24px;background:#000"></div>
<div class="a" style="left:800px;top:32px;width:257px;height:24px;background:#8a8a8a"></div>
<div class="a" style="left:1057px;top:32px;width:22px;height:24px;background:#474747"></div>
<div class="a" style="left:1079px;top:32px;width:49px;height:24px;background:#474747"></div>
<div class="tab" style="left:362px;top:32px;width:68px;height:23px"></div>
<div class="tab" style="left:432px;top:32px;width:95px;height:23px"></div>
<div class="tab" style="left:529px;top:32px;width:82px;height:23px;background:#8c8c8c"></div>
<div class="tab" style="left:613px;top:32px;width:95px;height:23px"></div>
<div class="tab" style="left:710px;top:32px;width:90px;height:23px"></div>
<svg class="a" style="left:363px;top:37px" width="440" height="14">
  <g id="leye"><path d="M0 7 L6 1 L16 1 L22 7 L16 13 L6 13 Z" fill="#7e7e7e"/><circle cx="11" cy="7" r="5.5" fill="#a8a8a8"/><path d="M9 4 L13 4 L14.5 7 L13 10 L9 10 L7.5 7 Z" fill="#7e7e7e" stroke="#222" stroke-width="1"/></g>
  <use href="#leye" x="69"/>
  <g transform="translate(166 0)" opacity="0.55"><path d="M0 7 L6 1 L16 1 L22 7 L16 13 L6 13 Z" fill="#6a6a6a"/><circle cx="11" cy="7" r="5.5" fill="#9a9a9a"/><circle cx="11" cy="7" r="3" fill="#8a8a8a"/></g>
  <use href="#leye" x="250"/>
  <use href="#leye" x="347"/>
</svg>
<div class="t" style="left:390px;top:36px;font-size:13px;color:#e0e0e0">MENU</div>
<div class="t" style="left:459px;top:36px;font-size:13px;color:#e0e0e0">メイン装飾</div>
<div class="t" style="left:556px;top:36px;font-size:13px;color:#f0f0f0">メイン床</div>
<div class="t" style="left:640px;top:36px;font-size:13px;color:#e0e0e0">ライバル床</div>
<div class="t" style="left:737px;top:36px;font-size:13px;color:#e0e0e0">レイヤー3</div>
<div class="a" style="left:1057px;top:33px;width:22px;height:22px;background:#474747;border:1.5px solid #cfcfcf;border-radius:3px"></div>
<div class="a" style="left:1066px;top:36px;width:4px;height:16px;background:linear-gradient(#000,#6e4a10)"></div>
<div class="a" style="left:1060px;top:41px;width:16px;height:4px;background:linear-gradient(#3a2205,#5e3e0c)"></div>
<svg class="a" style="left:1084px;top:37px" width="44" height="14"><path d="M0 7 L6 1 L6 4 L15 4 L15 10 L6 10 L6 13 Z" fill="#595959"/><path d="M39 7 L33 1 L33 4 L24 4 L24 10 L33 10 L33 13 Z" fill="#595959"/></svg>

<!-- scrollbars -->
<div class="a" style="left:1110px;top:56px;width:18px;height:720px;background:#efefef"></div>
<div class="a" style="left:1127px;top:56px;width:1px;height:721px;background:#9a9a9a"></div>
<div class="a" style="left:1111px;top:262px;width:15px;height:325px;background:#c8c8c8"></div>
<svg class="a" style="left:1113px;top:62px" width="12" height="10"><path d="M2.5 7.5 L6 3.5 L9.5 7.5" stroke="#3a3a3a" stroke-width="2.2" fill="none"/></svg>
<svg class="a" style="left:1113px;top:745px" width="12" height="10"><path d="M2.5 3 L6 7 L9.5 3" stroke="#3a3a3a" stroke-width="2.2" fill="none"/></svg>
<div class="a" style="left:362px;top:759px;width:765px;height:17px;background:#efefef;border-bottom:1px solid #a0a0a0"></div>
<div class="a" style="left:937px;top:760px;width:69px;height:14px;background:#c8c8c8"></div>
<svg class="a" style="left:366px;top:762px" width="10" height="12"><path d="M7 1 L2 6 L7 11" stroke="#444" stroke-width="2" fill="none"/></svg>
<svg class="a" style="left:1097px;top:762px" width="10" height="12"><path d="M2 2 L6.5 6 L2 10" stroke="#444" stroke-width="2" fill="none"/></svg>

<!-- status bar -->
<div class="a" style="left:362px;top:776px;width:766px;height:40px;background:#d3d3d3"></div>
<div class="t" style="left:363px;top:778px;color:#e4e4e4">186, 15 (2986, 246)</div>
<svg class="a" style="left:678px;top:780px" width="36" height="30"><circle cx="11" cy="10.5" r="8" fill="none" stroke="#3c3c3c" stroke-width="3"/><path d="M6.5 7 A5 5 0 0 1 11 5" stroke="#3c3c3c" stroke-width="1.2" fill="none"/><path d="M17 16.5 L31 26" stroke="#3c3c3c" stroke-width="4.5" stroke-linecap="round"/></svg>
<div class="a" style="left:715px;top:777px;width:100px;height:39px;background:#2e2e2e"></div>
<div class="a" style="left:755px;top:788px;width:27px;height:19px;background:#4a4a8e"></div>
<div class="t" style="left:755px;top:789px;font-size:15px;color:#e8e8e8">200%</div>
<div class="a" style="left:798px;top:786px;width:0;height:0;border-left:5px solid transparent;border-right:5px solid transparent;border-bottom:5px solid #151515"></div>
<div class="a" style="left:798px;top:802px;width:0;height:0;border-left:5px solid transparent;border-right:5px solid transparent;border-top:5px solid #151515"></div>
<div class="a" style="left:928px;top:777px;width:200px;height:39px;background:#000;border-radius:4px 0 0 0"></div>
<svg class="a" style="left:928px;top:777px" width="200" height="39">
  <path d="M6 5 L17 9 L38 13 L39 25 L36 32 L20 35 L14 27 L6 17 L1 13 L8 14 Z" fill="#e84040"/>
  <path d="M14 10 L16 25 M23 9 L21 22 L12 33" stroke="#000" stroke-width="0.7" fill="none"/>
  <path d="M20 31 L26 25 L35 25 L40 31 L35 37 L26 37 Z" fill="#8a8a8a"/><circle cx="32" cy="31" r="3.2" fill="none" stroke="#e04040" stroke-width="1.2"/>
  <rect x="43" y="5.5" width="31.5" height="24.5" fill="none" stroke="#bcbcbc" stroke-width="1.6"/>
  <path d="M44.5 16 L53 16 L53 12 L60 18 L53 24 L53 20 L44.5 20 Z" fill="#bcbcbc"/><path d="M73.5 16 L66 16 L66 12 L59 18 L66 24 L66 20 L73.5 20 Z" fill="#bcbcbc"/>
  <path d="M57 30 L62.5 23.5 L72.5 23.5 L78 30 L72.5 37 L62.5 37 Z" fill="#fafafa"/><circle cx="67.5" cy="30" r="4.5" fill="#000"/><circle cx="67.5" cy="30" r="1.6" fill="#fff"/>
  <path d="M85.2 12 L85.2 24 A15 15 0 0 0 115.3 24 L115.3 12 L109 12 L109 24 A8.75 8.75 0 0 1 91.5 24 L91.5 12 Z" fill="#5e5e5e"/>
  <path d="M89 8 Q100 2 111 8 M91 10.5 Q100 6 109 10.5" stroke="#555" stroke-width="1" fill="none"/>
  <path d="M129 3V36.5 M131.3 3V36.5 M136.4 3V36.5 M138.7 3V36.5 M143.4 3V36.5 M145.8 3V36.5 M150.4 3V36.5 M152.8 3V36.5 M124 5.8H156 M124 8.2H156 M124 10.9H156 M124 13.2H156 M124 16.4H156 M124 18.7H156 M124 21.4H156 M124 23.8H156 M124 26.9H156 M124 29.3H156 M124 32.4H156" stroke="#18a8f0" stroke-width="1"/>
  <path d="M166 11 Q172 7 180 10 L195 9 L195 35 Q188 38 180 35 Q172 32 166 35 Z" fill="none" stroke="#1a8ae8" stroke-width="2.2"/>
  <path d="M182 3.5 A6.5 6 0 0 1 190 12 L183 32 L174 13 A6.5 6 0 0 1 182 3.5 Z" fill="#aaa" stroke="#222" stroke-width="1.2"/>
  <path d="M176 10 Q182 14 189 10" stroke="#1a8ae8" stroke-width="2" fill="none"/>
</svg>

<!--/center-->
<!--right-->
<div class="a" style="left:1132px;top:32px;width:468px;height:784px;background:#4a4a4a"></div>
<div class="a" style="left:1132px;top:32px;width:468px;height:32px;background:#2e2e2e"></div>
<div class="t" style="letter-spacing:0.35px;left:1134px;top:36px;color:#dcdcdc">バネ(1)</div>
<div class="a" style="left:1132px;top:64px;width:468px;height:2px;background:#5a5a5a"></div>
<div class="a" style="left:1132px;top:66px;width:468px;height:1px;background:#000"></div>
<!-- sections -->
<div class="a" style="left:1132px;top:67px;width:468px;height:79px;background:linear-gradient(#5b5b5b,#545454)"></div>
<div class="a" style="left:1132px;top:146px;width:468px;height:1px;background:#111"></div>
<div class="a" style="left:1132px;top:147px;width:468px;height:175px;background:linear-gradient(#585858,#4f4f4f)"></div>
<div class="a" style="left:1132px;top:322px;width:468px;height:1px;background:#111"></div>
<div class="a" style="left:1132px;top:323px;width:468px;height:83px;background:linear-gradient(#555555,#4f4f4f)"></div>
<div class="a" style="left:1132px;top:406px;width:468px;height:1px;background:#111"></div>
<div class="a" style="left:1132px;top:407px;width:468px;height:348px;background:linear-gradient(#535353,#464646)"></div>
<div class="a" style="left:1132px;top:755px;width:468px;height:1px;background:#111"></div>
<div class="a" style="left:1132px;top:756px;width:468px;height:60px;background:linear-gradient(#4e4e4e,#484848)"></div>

<!-- Display settings -->
<div class="tri" style="left:1139.5px;top:78px"></div>
<div class="t" style="letter-spacing:0.35px;left:1158px;top:74px">Display Settings</div>
<div class="t" style="letter-spacing:0.35px;left:1132px;top:99px">Placement Layer:</div>
<div class="t" style="letter-spacing:0.35px;left:1255px;top:99px">メイン床</div>
<div class="t" style="letter-spacing:0.35px;left:1132px;top:125px">Display Priority:</div>
<div class="spin" style="left:1248px;top:122px;width:100px"><span class="v">0</span><i class="al"></i><i class="ar"></i></div>

<!-- Physics params -->
<div class="tri" style="left:1139.5px;top:158px"></div>
<div class="t" style="letter-spacing:0.08px;left:1158px;top:154px">Physics Calculation Parameters</div>
<div class="chk" style="left:1132.5px;top:180px"></div><svg class="a" style="left:1133px;top:179px" width="11" height="12"><path d="M1.5 6 L4 10 L9.5 1" stroke="#000" stroke-width="1.8" fill="none"/></svg>
<div class="t" style="letter-spacing:0.08px;left:1147px;top:177px">Fix Angle Between Spring and Link Point 1</div>
<div class="chk" style="left:1132.5px;top:202px"></div><svg class="a" style="left:1133px;top:201px" width="11" height="12"><path d="M1.5 6 L4 10 L9.5 1" stroke="#000" stroke-width="1.8" fill="none"/></svg>
<div class="t" style="letter-spacing:0.08px;left:1147px;top:199px">Fix Angle Between Spring and Link Point 2</div>
<div class="t" style="letter-spacing:0.35px;left:1132px;top:223px">Spring Constant (N·m):</div>
<div class="spin" style="left:1293px;top:220px"><span class="v">80.00</span><i class="al"></i><i class="ar"></i></div>
<div class="t" style="letter-spacing:0.35px;left:1132px;top:249px">Attentuation Factor:</div>
<div class="spin" style="left:1279px;top:246.5px"><span class="v">0.50</span><i class="al"></i><i class="ar"></i></div>
<div class="t" style="letter-spacing:0.35px;left:1132px;top:275px">Natural Length:</div>
<div class="spin" style="left:1246px;top:272px"><span class="v">1.36</span><i class="al"></i><i class="ar"></i></div>
<div class="t" style="letter-spacing:0.35px;left:1410px;top:275px;text-decoration:underline">Length on Layout1.17</div>
<div class="t" style="letter-spacing:0.35px;left:1132px;top:301px">Display Width:</div>
<div class="spin" style="left:1239px;top:298px"><span class="v">16.00</span><i class="al"></i><i class="ar"></i></div>

<!-- Link data -->
<div class="tri" style="left:1139.5px;top:334px"></div>
<div class="t" style="letter-spacing:0.35px;left:1158px;top:330px">Link Data</div>
<div class="t" style="letter-spacing:0.35px;left:1132px;top:355px">Link Point 1:</div>
<div class="t" style="letter-spacing:0.35px;left:1227px;top:355px">四角形(3)</div>
<div class="t" style="letter-spacing:0.35px;left:1132px;top:383px">Link Point 2:</div>
<div class="t" style="letter-spacing:0.35px;left:1227px;top:383px">四角形(2)</div>

<!-- coloring -->
<div class="tri" style="left:1139.5px;top:418px"></div>
<div class="t" style="letter-spacing:0.35px;left:1158px;top:414px">Coloring/Texture Settings</div>
<div class="rad" style="left:1132.5px;top:440px"></div>
<div class="t" style="letter-spacing:0.35px;left:1147px;top:437px">Set Coloring</div>
<div class="t" style="letter-spacing:0.35px;left:1132px;top:461px">Opacity:</div>
<div class="t" style="letter-spacing:0.35px;left:1132px;top:487px">Adjust Hue:</div>
<!-- sliders -->
<div class="a" style="left:1218.5px;top:458px;width:97px;height:20px;border-radius:10px;background:#888"></div>
<div class="a" style="left:1221px;top:466px;width:86px;height:4px;border-radius:2px;background:#4aa6ea"></div>
<div class="a" style="left:1305.5px;top:460px;width:9px;height:15px;border-radius:2px;background:#000"></div>
<div class="spin" style="left:1319px;top:458px;width:100px"><span class="v">255</span><i class="al"></i><i class="ar"></i></div>

<div class="a" style="left:1218.5px;top:484px;width:97px;height:20px;border-radius:10px;background:#888"></div>
<div class="a" style="left:1221px;top:492px;width:86px;height:4px;border-radius:2px;background:#4aa6ea"></div>
<div class="a" style="left:1305.5px;top:486px;width:9px;height:15px;border-radius:2px;background:#f00"></div>
<div class="spin" style="left:1319px;top:484px;width:100px"><span class="v">255</span><i class="al"></i><i class="ar"></i></div>

<div class="a" style="left:1218.5px;top:510px;width:97px;height:20px;border-radius:10px;background:#888"></div>
<div class="a" style="left:1221px;top:518px;width:86px;height:4px;border-radius:2px;background:#4aa6ea"></div>
<div class="a" style="left:1305.5px;top:512px;width:9px;height:15px;border-radius:2px;background:#008000"></div>
<div class="spin" style="left:1319px;top:510px;width:100px"><span class="v">255</span><i class="al"></i><i class="ar"></i></div>

<div class="a" style="left:1218.5px;top:536px;width:97px;height:20px;border-radius:10px;background:#888"></div>
<div class="a" style="left:1221px;top:544px;width:86px;height:4px;border-radius:2px;background:#4aa6ea"></div>
<div class="a" style="left:1305.5px;top:538px;width:9px;height:15px;border-radius:2px;background:#00f"></div>
<div class="spin" style="left:1319px;top:536px;width:100px"><span class="v">255</span><i class="al"></i><i class="ar"></i></div>

<div class="rad on" style="left:1132.5px;top:566px"></div>
<div class="t" style="letter-spacing:0.35px;left:1147px;top:563px">Texture Settings</div>
<div class="t" style="letter-spacing:0.12px;left:1132px;top:587px">Select Image Resource:</div>
<div class="a" style="left:1290px;top:584px;width:160px;height:26px;background:#2e2e2e;border-radius:3px"></div>
<div class="t" style="letter-spacing:0.35px;left:1298px;top:590px">物理バネ_16x16</div>
<div class="a" style="left:1430px;top:595px;width:0;height:0;border-left:5px solid transparent;border-right:5px solid transparent;border-top:5px solid #111"></div>
<div class="a" style="left:1454px;top:584px;width:53px;height:26px;background:linear-gradient(#fafafa,#e4e4e4);border:1px solid #bdbdbd;border-radius:2px"></div>
<div class="t" style="letter-spacing:0.35px;left:1466px;top:590px;color:#111">New</div>
<div class="t" style="letter-spacing:0.08px;left:1132px;top:618px">Image Resource Placement Settings:</div>
<div class="rad" style="left:1132.5px;top:645px"></div>
<div class="t" style="letter-spacing:0.35px;left:1147px;top:642px">Show Original Size</div>
<div class="rad" style="left:1132.5px;top:667px"></div>
<div class="t" style="letter-spacing:0.08px;left:1147px;top:664px">Increase or Decrease Along with Object</div>
<div class="rad on" style="left:1132.5px;top:689px"></div>
<div class="t" style="letter-spacing:0.35px;left:1147px;top:686px">Show in Tile Shape</div>
<div class="rad" style="left:1132.5px;top:711px"></div>
<div class="t" style="letter-spacing:0.08px;left:1147px;top:708px">Set Increase/Decrease Rate (%)</div>
<div class="spin" style="left:1352px;top:707px"><span class="v">100.00</span><i class="al"></i><i class="ar"></i></div>
<div class="t" style="letter-spacing:0.35px;left:1132px;top:734px">Position:</div>
<div class="t" style="letter-spacing:0.35px;left:1201px;top:734px">X</div>
<div class="spin" style="left:1218px;top:731px;width:100px"><span class="v">0</span><i class="al"></i><i class="ar"></i></div>
<div class="t" style="letter-spacing:0.35px;left:1322px;top:734px">Y</div>
<div class="spin" style="left:1339px;top:731px;width:100px"><span class="v">0</span><i class="al"></i><i class="ar"></i></div>

<!-- options -->
<div class="tri" style="left:1139.5px;top:767px"></div>
<div class="t" style="letter-spacing:0.35px;left:1158px;top:763px">Options</div>
<div class="chk" style="left:1132.5px;top:789px"></div>
<div class="t" style="letter-spacing:0.35px;left:1147px;top:786px">Hide During Game</div>

<!--/right-->
<!-- dividers -->
<div class="a" style="left:358px;top:32px;width:4px;height:784px;background:#fff"></div>
<div class="a" style="left:1128px;top:32px;width:4px;height:784px;background:#fff"></div>

</body></html>
